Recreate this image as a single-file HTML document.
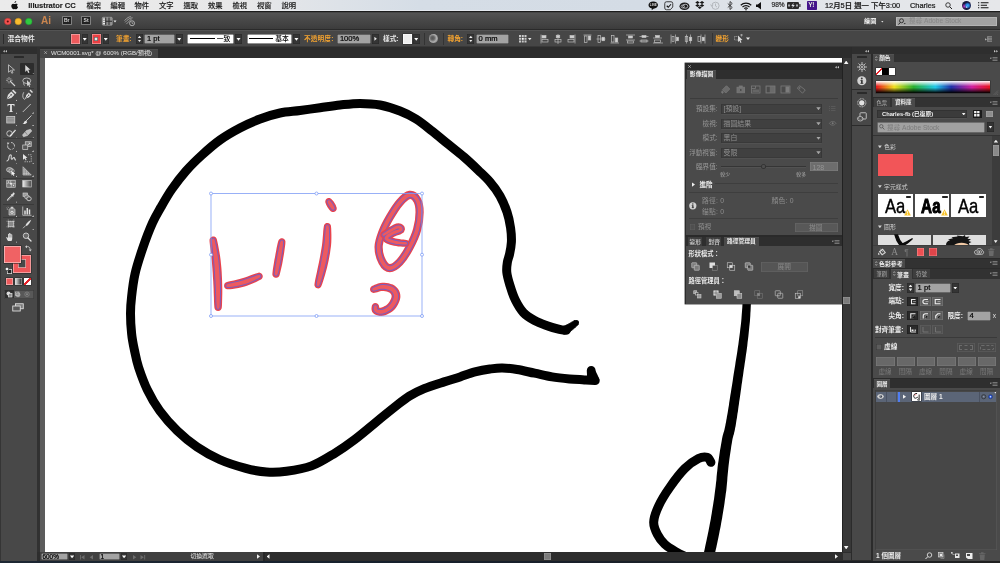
<!DOCTYPE html>
<html lang="zh-Hant">
<head>
<meta charset="utf-8">
<title>Illustrator CC</title>
<style>
*{box-sizing:border-box;margin:0;padding:0}
html,body{width:1000px;height:563px;overflow:hidden;background:#3a3a3a}
body{position:relative;will-change:transform;font-family:"Liberation Sans","Noto Sans CJK TC",sans-serif;font-size:6.5px;color:#e6e6e6;line-height:1}
.a{position:absolute}
.t{position:absolute;white-space:nowrap;line-height:1}
.b{font-weight:bold}
.or{color:#f5a430}
/* ---------- menu bar ---------- */
#menubar{left:0;top:0;width:1000px;height:11px;background:linear-gradient(90deg,#ebebeb 0,#e8e8e9 24%,#dde2e8 34%,#d5dde6 42%,#d4dce5 64%,#dde2e8 72%,#e3e6ea 85%,#e6e7ea 100%);color:#1b1b1b;font-size:7.3px;box-shadow:inset 0 -.5px 0 #f4f6f8}
#menubar .t{top:2px;font-weight:500;-webkit-text-stroke:.12px #1b1b1b}
#menubar .t.b{font-weight:bold}
/* ---------- app bar ---------- */
#appbar{left:0;top:11px;width:1000px;height:19px;background:linear-gradient(180deg,#1c1c1c 0,#1c1c1c 1.2px,#545454 1.6px,#4a4a4a 40%,#3d3d3d 92%,#2a2a2a 96%,#2a2a2a 100%)}
/* ---------- control bar ---------- */
#ctrl{left:0;top:30px;width:1000px;height:17.4px;background:#464646;box-shadow:inset 0 .7px 0 #585858,inset 0 -.6px 0 #2a2a2a}
/* ---------- tab bar ---------- */
#tabbar{left:37px;top:47.4px;width:815px;height:10.6px;background:#2c2c2c}
/* ---------- tools ---------- */
#tools{left:0;top:47px;width:37px;height:516px;background:#484848}
#toolgap{left:37px;top:47px;width:2.500px;height:516px;background:#313131}
#lb{left:39.500px;top:57.500px;width:6px;height:495px;background:#5c5c5c}
/* ---------- canvas ---------- */
#canvas{left:45.300px;top:57.800px;width:796.700px;height:494.200px;background:#fff}
#vscroll{left:842px;top:57.800px;width:10px;height:494.500px;background:#383838;border-left:.6px solid #222;border-right:1.500px solid #262626}
#status{left:37px;top:552px;width:815px;height:8.500px;background:#2d2d2d}
/* ---------- right dock ---------- */
#dock{left:852px;top:47px;width:148px;height:516px;background:#3a3a3a}
/* ---------- floating panel ---------- */
#fp{left:685px;top:63px;width:156px;height:241px;background:#4a4a4a}

/* widgets */
.dd{position:absolute;width:6.5px;height:9.5px;background:#353535;border-radius:.5px;box-shadow:inset 0 0 0 .5px #292929}
.dd:after{content:"";position:absolute;left:1.05px;top:3.6px;width:4.4px;height:2.9px;background:#fafafa;clip-path:polygon(0 0,100% 0,50% 100%)}
.fld{position:absolute;height:9.5px;background:#a3a3a3;color:#000;font-size:7.6px;line-height:9.7px;padding-left:2.6px;white-space:nowrap;-webkit-text-stroke:.2px #000;box-shadow:inset 0 0 0 .5px #2c2c2c,inset 0 .5px 0 #8a8a8a}
.stp{position:absolute;width:7px;height:9.5px;background:#353535;box-shadow:inset 0 0 0 .5px #292929}
.stp:before{content:"";position:absolute;left:1.6px;top:1.6px;width:3.8px;height:2.5px;background:#f0f0f0;clip-path:polygon(50% 0,100% 100%,0 100%)}
.stp:after{content:"";position:absolute;left:1.6px;bottom:1.6px;width:3.8px;height:2.5px;background:#f0f0f0;clip-path:polygon(0 0,100% 0,50% 100%)}
.wbox{position:absolute;height:9.5px;background:#fff;color:#000;font-size:6.5px;box-shadow:inset 0 0 0 .5px #222}
.sep{position:absolute;width:1px;background:#333;top:32.5px;height:12px}
.ic{position:absolute;overflow:visible}
.sdd:after{top:2.6px;left:.9px}
</style>
</head>
<body>
<div id="menubar" class="a">
<svg class="ic" style="left:11px;top:1px" width="7.5" height="9" viewBox="0 0 15 18"><path fill="#111" d="M10.4 0c.1 1-.3 2-.9 2.700-.6.700-1.600 1.300-2.500 1.200-.1-1 .4-2 .9-2.600C8.500.600 9.600.050 10.400 0zM13.600 6.300c-.9.600-1.500 1.500-1.500 2.700 0 1.400.8 2.500 2 3-.300.900-.8 1.800-1.300 2.500-.700 1-1.400 2-2.500 2s-1.400-.6-2.700-.6-1.700.6-2.700.6-1.800-1-2.600-2.100C.800 12.200 0 9.400 1.200 7.300 1.900 6.100 3.100 5.400 4.400 5.400c1 0 1.900.700 2.600.700.600 0 1.700-.800 2.900-.700 1.400.050 2.700.300 3.700.900z"/></svg>
<span class="t b" style="left:28.3px;font-size:7.6px;top:1.7px;letter-spacing:-.05px">Illustrator CC</span>
<span class="t" style="left:86.5px">檔案</span><span class="t" style="left:110.5px">編輯</span><span class="t" style="left:134.5px">物件</span><span class="t" style="left:159px">文字</span><span class="t" style="left:183.5px">選取</span><span class="t" style="left:208px">效果</span><span class="t" style="left:232.5px">檢視</span><span class="t" style="left:257px">視窗</span><span class="t" style="left:281.5px">說明</span>
<!-- status icons -->
<svg class="ic" style="left:648px;top:1px" width="10.500" height="9.500" viewBox="0 0 21 19"><path fill="#111" d="M10.500 1C5 1 1 4.200 1 8.200c0 3.300 2.800 6.100 6.800 6.900l-.5 3.200 3.700-3c5.200-.1 9-3.200 9-7.100C20 4.200 16 1 10.500 1z"/><text x="10.500" y="10.500" font-size="6" font-weight="bold" fill="#ddd" text-anchor="middle" font-family="Liberation Sans,sans-serif">LINE</text></svg>
<svg class="ic" style="left:664px;top:1px" width="9.500" height="9.500" viewBox="0 0 19 19"><path fill="none" stroke="#222" stroke-width="1.700" d="M5 1.500h9a3.500 3.500 0 0 1 3.500 3.500v7l-5 5.500H5A3.500 3.500 0 0 1 1.500 14V5A3.500 3.500 0 0 1 5 1.500z"/><path fill="none" stroke="#111" stroke-width="2.200" d="M5.500 9.500l3 3 5.500-6"/></svg>
<svg class="ic" style="left:678.5px;top:1.5px" width="11" height="8.500" viewBox="0 0 22 17"><ellipse cx="11" cy="8.500" rx="10" ry="7.500" fill="#1c1c1c"/><ellipse cx="12.500" cy="8.500" rx="5.200" ry="4" fill="none" stroke="#d8dce2" stroke-width="1.500"/><ellipse cx="7.500" cy="9" rx="3.500" ry="3" fill="none" stroke="#d8dce2" stroke-width="1.300"/></svg>
<svg class="ic" style="left:695px;top:1px" width="9.500" height="9" viewBox="0 0 19 18"><path fill="#151515" d="M5 0l4.500 3L5 6 .5 3zM14 0l4.500 3L14 6 9.500 3zM5 6l4.500 3L5 12 .5 9zM14 6l4.500 3L14 12 9.500 9zM9.500 10.500l4 2.700-4 2.800-4-2.800z"/></svg>
<svg class="ic" style="left:710px;top:1px" width="10" height="9.500" viewBox="0 0 20 19"><circle cx="11" cy="9.500" r="7.200" fill="none" stroke="#a9adb3" stroke-width="1.600"/><path fill="none" stroke="#a9adb3" stroke-width="1.500" d="M11 5v5l3 2M1 7l2.500 3.500L6.500 8"/></svg>
<svg class="ic" style="left:727px;top:1.2px" width="6" height="9" viewBox="0 0 12 18"><path fill="none" stroke="#222" stroke-width="1.600" d="M1.500 5l9 8-4.500 4V1l4.500 4-9 8"/></svg>
<svg class="ic" style="left:739.5px;top:1.5px" width="12" height="8.500" viewBox="0 0 24 17"><path fill="none" stroke="#111" stroke-width="2.300" d="M1.500 6.500a15 15 0 0 1 21 0M5 10a10 10 0 0 1 14 0M8.500 13.300a5 5 0 0 1 7 0"/><circle cx="12" cy="15.500" r="1.500" fill="#111"/></svg>
<svg class="ic" style="left:756px;top:2px" width="5.500" height="7.500" viewBox="0 0 11 15"><path fill="#111" d="M0 5h3.500L10 0v15L3.500 10H0z"/></svg>
<span class="t" style="left:771.5px;font-size:6.6px;top:2.3px;color:#2a2a2a;-webkit-text-stroke:.2px #2a2a2a">98%</span>
<svg class="ic" style="left:787px;top:2.3px" width="13.500" height="7" viewBox="0 0 27 14"><rect x="0" y="0" width="24" height="14" rx="2.500" fill="#2a2a2a"/><rect x="24.500" y="4" width="2.500" height="6" rx="1" fill="#2a2a2a"/><path fill="#dfe3e8" d="M13.500 1.500l-5 6.500h3.200l-1.200 4.500 5-6.500h-3.200z"/><rect x="2" y="5" width="4" height="4" fill="#dfe3e8" opacity=".7"/><rect x="18" y="5" width="4" height="4" fill="#dfe3e8" opacity=".7"/></svg>
<div class="a" style="left:807px;top:1px;width:9.5px;height:9px;background:#45158c;border-radius:.8px"></div><span class="t b" style="left:808.3px;top:2px;font-size:6.5px;color:#fff;letter-spacing:-.3px">Y!</span>
<span class="t" style="left:825px;font-size:7.4px;top:1.8px;-webkit-text-stroke:.22px #1b1b1b">12月5日 週一 下午3:00</span>
<span class="t" style="left:910px;font-size:7.4px;top:1.8px;-webkit-text-stroke:.22px #1b1b1b">Charles</span>
<svg class="ic" style="left:945px;top:1.8px" width="7.500" height="7.500" viewBox="0 0 15 15"><circle cx="6" cy="6" r="4.500" fill="none" stroke="#222" stroke-width="1.700"/><path stroke="#222" stroke-width="2" d="M9.500 9.500l4.500 4.500"/></svg>
<div class="a" style="left:961.8px;top:1px;width:9.4px;height:9.4px;border-radius:50%;background:radial-gradient(circle at 52% 68%,#fff 0,rgba(255,255,255,0) 14%),radial-gradient(circle at 62% 50%,#35b8f2 0,#2a7fe0 22%,rgba(30,60,170,0) 46%),radial-gradient(circle at 28% 58%,#c238c8 0,rgba(150,40,170,0) 34%),#15163c;box-shadow:0 0 0 .5px #f2f4f8"></div>
<svg class="ic" style="left:978px;top:2.3px" width="10.500" height="6.500" viewBox="0 0 21 13"><path stroke="#151515" stroke-width="2.300" d="M0 1.500h2.500M0 6.500h2.500M0 11.500h2.500M5.500 1.500H21M5.500 6.500H18M5.500 11.500H21"/></svg>
</div>
<div id="appbar" class="a"></div>
<svg class="ic" style="left:3px;top:17px" width="31" height="9" viewBox="0 0 31 9"><circle cx="4.75" cy="4.5" r="3.25" fill="#f4514f" stroke="#bf3534" stroke-width=".5"/><circle cx="4.75" cy="4.5" r="1.05" fill="#5c0d0c"/><circle cx="15.25" cy="4.5" r="3.25" fill="#f7bb2e" stroke="#c38d1c" stroke-width=".5"/><circle cx="25.75" cy="4.5" r="3.25" fill="#30c941" stroke="#1f9c2d" stroke-width=".5"/></svg>
<span class="t b" style="left:41px;top:13.900px;font-size:11.700px;color:#c9854f;transform:scaleX(.86);transform-origin:0 0">Ai</span>
<div class="a" style="left:62px;top:16.400px;width:9.500px;height:8.400px;border-radius:1.200px;background:#222;box-shadow:inset 0 0 0 .8px #9a9a9a"></div><span class="t b" style="left:64px;top:18.300px;font-size:5px;color:#d8d8d8">Br</span>
<div class="a" style="left:81.300px;top:16.400px;width:9.500px;height:8.400px;border-radius:1.200px;background:#222;box-shadow:inset 0 0 0 .8px #9a9a9a"></div><span class="t b" style="left:83.600px;top:18.300px;font-size:5px;color:#d8d8d8">St</span>
<svg class="ic" style="left:101.500px;top:16.500px" width="15" height="8.500" viewBox="0 0 30 17"><rect x=".5" y=".5" width="20" height="16" rx="2" fill="#8c8c8c" stroke="#b5b5b5"/><path stroke="#2a2a2a" stroke-width="2" d="M7.500 1v15M8 8.500h12M14 1v15"/><rect x="2" y="3" width="4" height="2.500" fill="#e8e8e8"/><rect x="2" y="7.500" width="4" height="2.500" fill="#e8e8e8"/><rect x="2" y="12" width="4" height="2.500" fill="#e8e8e8"/><path fill="#e8e8e8" d="M23 7h6l-3 4z"/></svg>
<svg class="ic" style="left:124px;top:16px" width="11.500" height="10.500" viewBox="0 0 20 18"><path fill="none" stroke="#a8a8a8" stroke-width="1.500" d="M1 8c4-5 8-7 11-7M2 11c4-5 9-8 13-8M4 14l9-9"/><circle cx="14" cy="12.500" r="4.300" fill="#3f3f3f" stroke="#c0c0c0" stroke-width="1.500"/><path fill="none" stroke="#c0c0c0" stroke-width="1.200" d="M14 10V12.700h2.200"/></svg>
<span class="t b" style="left:864px;top:18.200px;font-size:6.200px;color:#f0f0f0">繪圖</span>
<div class="a" style="left:880.800px;top:20.500px;width:3px;height:2px;background:#e0e0e0;clip-path:polygon(0 0,100% 0,50% 100%)"></div>
<div class="a" style="left:896px;top:17px;width:100.500px;height:8.800px;background:#a2a2a2;border-radius:.8px;box-shadow:inset 0 0 0 .6px #c4c4c4"></div>
<svg class="ic" style="left:898px;top:18px" width="8" height="7" viewBox="0 0 16 14"><circle cx="7" cy="5.500" r="4" fill="none" stroke="#2a2a2a" stroke-width="1.800"/><path stroke="#2a2a2a" stroke-width="2" d="M4.500 9L1 13"/><path fill="#2a2a2a" d="M11.500 10h4l-2 2.500z"/></svg>
<span class="t" style="left:909px;top:18.200px;font-size:6.600px;color:#878787">搜尋 Adobe Stock</span>
<div id="ctrl" class="a"></div>
<div class="a" style="left:2.500px;top:33.500px;width:1px;height:10.500px;background:#2b2b2b"></div>
<span class="t b" style="left:7.500px;top:36px;font-size:6.800px;color:#e8e8e8">混合物件</span>
<div class="a" style="left:70.500px;top:34px;width:9.800px;height:9.600px;background:#ef5b5d;box-shadow:inset 0 0 0 .7px #f4a9a9,0 0 0 .5px #2a2a2a"></div>
<div class="dd" style="left:81.500px;top:34.200px"></div>
<div class="a" style="left:91.500px;top:34px;width:9.800px;height:9.600px;background:#ea3f43;box-shadow:inset 0 0 0 .7px #f39a9a,0 0 0 .5px #2a2a2a"></div><div class="a" style="left:94.300px;top:36.800px;width:4.200px;height:4.200px;background:#e9e9e9;box-shadow:inset 0 0 0 .8px #6a6a6a"></div>
<div class="dd" style="left:102.500px;top:34.200px"></div>
<span class="t b or" style="left:116px;top:36px;font-size:6.700px">筆畫:</span>
<div class="stp" style="left:136px;top:34.200px"></div>
<div class="fld" style="left:144.300px;top:34.200px;width:30.500px">1 pt</div>
<div class="dd" style="left:176px;top:34.200px"></div>
<div class="wbox" style="left:187px;top:34.200px;width:46.800px"></div><div class="a" style="left:190px;top:38.300px;width:24.500px;height:1.100px;background:#000"></div><span class="t" style="left:216.800px;top:35.800px;font-size:6.800px;color:#000;font-weight:500">一致</span>
<div class="dd" style="left:235.300px;top:34.200px"></div>
<div class="wbox" style="left:246.500px;top:34.200px;width:45.300px"></div><div class="a" style="left:249px;top:38.200px;width:23.500px;height:1.300px;background:#000"></div><span class="t" style="left:275.300px;top:35.800px;font-size:6.800px;color:#000;font-weight:500">基本</span>
<div class="dd" style="left:293.200px;top:34.200px"></div>
<span class="t b or" style="left:304px;top:36px;font-size:6.700px;letter-spacing:.1px">不透明度:</span>
<div class="fld" style="left:337.300px;top:34.200px;width:34px">100%</div>
<div class="dd" style="left:372px;top:34.200px"></div><div class="a" style="left:372.600px;top:34.800px;width:5.400px;height:8.400px;background:#353535"></div><div class="a" style="left:374.400px;top:36.800px;width:2.4px;height:4px;background:#e8e8e8;clip-path:polygon(0 0,100% 50%,0 100%)"></div>
<span class="t b" style="left:383px;top:36px;font-size:6.700px;color:#e8e8e8">樣式:</span>
<div class="a" style="left:402.500px;top:34px;width:9.300px;height:9.600px;background:#eee;box-shadow:inset 0 0 0 .6px #fff,0 0 0 .5px #2a2a2a"></div>
<div class="dd" style="left:413px;top:34.200px"></div>
<div class="sep" style="left:423.500px"></div>
<div class="a" style="left:429.300px;top:34.400px;width:8.600px;height:8.600px;border-radius:50%;background:radial-gradient(circle at 40% 45%,#555 0,#666 25%,#b0b0b0 55%,#8a8a8a 75%,#c8c8c8 100%)"></div>
<div class="sep" style="left:442.500px"></div>
<span class="t b or" style="left:447.500px;top:36px;font-size:6.700px">轉角:</span>
<div class="stp" style="left:467.300px;top:34.200px"></div>
<div class="fld" style="left:476px;top:34.200px;width:32.800px">0 mm</div>
<svg class="ic" style="left:519px;top:34.500px" width="13" height="8" viewBox="0 0 26 16"><g fill="#c9c9c9"><rect x="0" y="0" width="4" height="4"/><rect x="5.500" y="0" width="4" height="4"/><rect x="11" y="0" width="4" height="4"/><rect x="0" y="5.500" width="4" height="4"/><rect x="5.500" y="5.500" width="4" height="4" fill="#fff"/><rect x="11" y="5.500" width="4" height="4"/><rect x="0" y="11" width="4" height="4"/><rect x="5.500" y="11" width="4" height="4"/><rect x="11" y="11" width="4" height="4"/></g><path fill="#e8e8e8" d="M18 6h7l-3.500 4.500z"/></svg>
<svg class="ic" style="left:540px;top:33.800px" width="166" height="10" viewBox="0 0 332 20" fill="none" stroke="#c4c4c4" stroke-width="1.300">
<g><path d="M2 1v18"/><rect x="4" y="3" width="8" height="5" fill="#d0d0d0"/><rect x="4" y="11" width="12" height="5"/></g>
<g transform="translate(28 0)"><path d="M8 0v20"/><rect x="4.500" y="2.500" width="7" height="5" fill="#d0d0d0"/><rect x="2" y="11" width="12" height="5"/></g>
<g transform="translate(54 0)"><path d="M16 1v18"/><rect x="6" y="3" width="8" height="5" fill="#d0d0d0"/><rect x="2" y="11" width="12" height="5"/></g>
<g transform="translate(87 0)"><path d="M0 2h16"/><rect x="2" y="4" width="5" height="13"/><rect x="9.500" y="4" width="5" height="8" fill="#d0d0d0"/></g>
<g transform="translate(113 0)"><path d="M0 10h18"/><rect x="3" y="3" width="5" height="14"/><rect x="11" y="6.500" width="5" height="7" fill="#d0d0d0"/></g>
<g transform="translate(141 0)"><path d="M0 18h17"/><rect x="2" y="3" width="5" height="13"/><rect x="9.500" y="8" width="5" height="8" fill="#d0d0d0"/></g>
<g transform="translate(172 0)"><path d="M0 2h18M0 12h18"/><rect x="5" y="4" width="8" height="4" fill="#d0d0d0"/><rect x="3" y="14" width="12" height="4"/></g>
<g transform="translate(199 0)"><path d="M0 5h18M0 14h18"/><rect x="5" y="3" width="8" height="4" fill="#d0d0d0"/><rect x="3" y="12" width="12" height="4"/></g>
<g transform="translate(226 0)"><path d="M0 8h18M0 18h20"/><rect x="5" y="3" width="8" height="4" fill="#d0d0d0"/><rect x="3" y="12" width="12" height="5"/></g>
<g transform="translate(260 0)"><path d="M2 1v18M11 1v18"/><rect x="4" y="5" width="4" height="10"/><rect x="13" y="6.500" width="4" height="7" fill="#d0d0d0"/></g>
<g transform="translate(288 0)"><path d="M5 1v18M13 1v18"/><rect x="2.500" y="5" width="5" height="10"/><rect x="11" y="6.500" width="4.500" height="7" fill="#d0d0d0"/></g>
<g transform="translate(314 0)"><path d="M8 1v18M16 1v18"/><rect x="2" y="5" width="5" height="10"/><rect x="10.500" y="6.500" width="4" height="7" fill="#d0d0d0"/></g>
</svg>
<div class="sep" style="left:711.500px"></div>
<span class="t b or" style="left:715.500px;top:36px;font-size:6.700px">變形</span>
<svg class="ic" style="left:734px;top:34px" width="17" height="9.500" viewBox="0 0 34 19"><rect x="1" y="5" width="9" height="7" fill="none" stroke="#bdbdbd" stroke-width="1.400" stroke-dasharray="2 1.500"/><path fill="#d8d8d8" d="M8 3l9 9-4 .5 2 4.500-2 1-2-4.500-3 2.500z"/><path stroke="#bdbdbd" stroke-width="1.300" d="M12 2h6M15 0v5"/><path fill="#e8e8e8" d="M24 7h8l-4 5z"/></svg>
<svg class="ic" style="left:984.500px;top:36px" width="8" height="6" viewBox="0 0 20 16"><path fill="#d0d0d0" d="M0 6l4 3-4 3z"/><path stroke="#bdbdbd" stroke-width="1.600" d="M6 2h12M6 6h12M6 10h12M6 14h12"/><path stroke="#bdbdbd" stroke-width="1.500" d="M6.700 1v14"/></svg>
<div id="tabbar" class="a"></div>
<div class="a" style="left:39.500px;top:48.500px;width:118.500px;height:9.300px;background:#464646;box-shadow:inset 0 .5px 0 #555"></div>
<svg class="ic" style="left:43.800px;top:51.300px" width="3.200" height="3.200" viewBox="0 0 6 6"><path stroke="#c8c8c8" stroke-width="1.100" d="M.5.500l5 5M5.500.500l-5 5"/></svg>
<span class="t" style="left:51px;top:50.400px;font-size:6.150px;color:#e2e2e2">WCM0001.svg* @ 600% (RGB/預視)</span>
<!--TOOLS-->
<div id="tools" class="a"></div>
<div class="a" style="left:0;top:47px;width:37.500px;height:6.500px;background:#2e2e2e"></div>
<div class="a" style="left:0;top:53.500px;width:1px;height:507px;background:#353535"></div>
<svg class="ic" style="left:3px;top:49.700px" width="4" height="2.600" viewBox="0 0 8 5"><path fill="#c8c8c8" d="M3.500 0v5L0 2.500zM8 0v5L4.500 2.500z"/></svg>
<div class="a" style="left:13.500px;top:56px;width:10px;height:1.600px;background:#2a2a2a;border-radius:.5px"></div>
<div class="a" style="left:19.500px;top:62.800px;width:14.500px;height:11.800px;background:#2d2d2d;border-radius:.8px"></div>
<div class="a" style="left:3px;top:87.6px;width:31px;height:.7px;background:#3a3a3a"></div>
<div class="a" style="left:3px;top:138.3px;width:31px;height:.7px;background:#3a3a3a"></div>
<div class="a" style="left:3px;top:177.7px;width:31px;height:.7px;background:#3a3a3a"></div>
<div class="a" style="left:3px;top:203.8px;width:31px;height:.7px;background:#3a3a3a"></div>
<div class="a" style="left:3px;top:216.6px;width:31px;height:.7px;background:#3a3a3a"></div>
<svg class="ic" style="left:6.2px;top:63.6px" width="10" height="10" viewBox="0 0 20 20"><path fill="none" stroke="#d2d2d2" stroke-width="1.500" stroke-linejoin="round" d="M5 1.500v15l4-3.500 2.500 5.500 2.500-1-2.500-5.500H17z"/></svg>
<svg class="ic" style="left:22.2px;top:63.6px" width="10" height="10" viewBox="0 0 20 20"><path fill="#d8d8d8" d="M6.500 2v14l3.500-3.500 2.300 5.500 2.600-1.100-2.300-5.400H17z"/></svg>
<svg class="ic" style="left:6.2px;top:76.8px" width="10" height="10" viewBox="0 0 20 20"><path stroke="#d2d2d2" stroke-width="2.200" d="M8 8l10 10"/><path stroke="#d2d2d2" stroke-width="1.300" d="M6 0v5M6 9v4M0 6.500h4M8 6.500h5M2 2.500l2.500 2.500M10 2.500L8 5M2.500 10.500L4.500 8.500"/></svg>
<svg class="ic" style="left:22.2px;top:76.8px" width="10" height="10" viewBox="0 0 20 20"><ellipse cx="9.500" cy="7.500" rx="8" ry="5.500" fill="none" stroke="#d2d2d2" stroke-width="1.600"/><path fill="#d2d2d2" d="M10 6l8 9-3.500.3 1.800 3.700-1.800.8-1.800-3.700-2.700 2z"/><path fill="none" stroke="#d2d2d2" stroke-width="1.300" d="M4 11c-2 2-1 5 2 6"/></svg>
<svg class="ic" style="left:6.2px;top:90.0px" width="10" height="10" viewBox="0 0 20 20"><path fill="#dcdcdc" d="M1.500 18.500L4 9.500 10.500 3l6.500 6.500L10.500 16zM12 1.500L14.500-1 21 5.500 18.500 8z"/><path stroke="#4a4a4a" stroke-width="1.200" d="M2.500 17.500l7-7"/><circle cx="10.300" cy="9.700" r="1.600" fill="#4a4a4a"/></svg>
<svg class="ic" style="left:22.2px;top:90.0px" width="10" height="10" viewBox="0 0 20 20"><path fill="#dcdcdc" d="M7 15.500l1.500-7L13.500 3.500l5 5-5 5zM15-.5l2-2 5 5-2 2z" transform="translate(0 1.500)"/><path stroke="#4a4a4a" stroke-width="1.100" d="M8 16l5-5"/><circle cx="13.300" cy="10.500" r="1.300" fill="#4a4a4a"/><path fill="none" stroke="#dcdcdc" stroke-width="1.500" d="M3.500 4.500C1 9 1 14 3 17s4.500 1 4-2"/></svg>
<svg class="ic" style="left:6.2px;top:102.8px" width="10" height="10" viewBox="0 0 20 20"><path fill="#e0e0e0" d="M3 2h14v4.500h-1.200c-.3-2-1-2.700-2.800-2.700h-1.200v11.500c0 1.200.5 1.500 2.200 1.600V18H6v-1.100c1.700-.1 2.200-.4 2.200-1.600V3.800H7C5.200 3.800 4.500 4.500 4.200 6.500H3z"/></svg>
<svg class="ic" style="left:22.2px;top:102.8px" width="10" height="10" viewBox="0 0 20 20"><path stroke="#d2d2d2" stroke-width="1.700" d="M1.500 18L17.500 2"/></svg>
<svg class="ic" style="left:6.2px;top:115.2px" width="10" height="10" viewBox="0 0 20 20"><rect x="1.500" y="3" width="16" height="13" fill="#8a8a8a" stroke="#d2d2d2" stroke-width="1.500"/><path stroke="#b5b5b5" stroke-width=".8" d="M2 7h15M2 10h15M2 13h15"/></svg>
<svg class="ic" style="left:22.2px;top:115.2px" width="10" height="10" viewBox="0 0 20 20"><path stroke="#d2d2d2" stroke-width="1.800" d="M19 1L7 13"/><path fill="#e6e6e6" d="M8 11.500l2.500 2.500c-1 3-4 4.500-9.500 4 2.500-1 2.500-2 3-3.500.5-1.500 2-3 4-3z"/></svg>
<svg class="ic" style="left:6.2px;top:127.6px" width="10" height="10" viewBox="0 0 20 20"><circle cx="7" cy="11" r="5.500" fill="none" stroke="#d2d2d2" stroke-width="1.700"/><path stroke="#e6e6e6" stroke-width="2.600" d="M7.500 16.500L19 4"/><path stroke="#4a4a4a" stroke-width=".8" d="M6 16l12-13"/></svg>
<svg class="ic" style="left:22.2px;top:127.6px" width="10" height="10" viewBox="0 0 20 20"><path fill="#bdbdbd" stroke="#e0e0e0" stroke-width="1" d="M9 5l8-2.500 2.500 3.500-8.500 9-8 2.500L1 14z"/><path stroke="#555" stroke-width="1" d="M6.500 8l4 5.500"/></svg>
<svg class="ic" style="left:6.2px;top:141.0px" width="10" height="10" viewBox="0 0 20 20"><path fill="none" stroke="#d2d2d2" stroke-width="1.700" stroke-dasharray="12 2.500 4 2.500" d="M10 3a7 7 0 1 1-6.500 4.500"/><path fill="#d2d2d2" d="M2 3l5 .5-3.500 4.500z"/></svg>
<svg class="ic" style="left:22.2px;top:141.0px" width="10" height="10" viewBox="0 0 20 20"><rect x="6.500" y="1.500" width="12" height="9.500" fill="#777" stroke="#d2d2d2" stroke-width="1.400"/><rect x="1.500" y="8" width="10" height="9" fill="#5a5a5a" stroke="#d2d2d2" stroke-width="1.400"/><path stroke="#efefef" stroke-width="1.200" d="M12 8l4-4M16 4v3M16 4h-3"/></svg>
<svg class="ic" style="left:6.2px;top:153.4px" width="10" height="10" viewBox="0 0 20 20"><path fill="none" stroke="#d2d2d2" stroke-width="2.300" stroke-linecap="round" d="M2 16c3-1 4-4 4-7s2-6 4-5-1 6 1 8 3-4 5-3 1 4 3 5"/></svg>
<svg class="ic" style="left:22.2px;top:153.4px" width="10" height="10" viewBox="0 0 20 20"><path fill="#e6e6e6" d="M2 2l9 7.500-3.800.6 2 4-1.800.9-2-4L2 13.500z"/><path fill="none" stroke="#d2d2d2" stroke-width="1.500" stroke-dasharray="2.500 2" d="M12 3.500h6.500v14H5"/></svg>
<svg class="ic" style="left:6.2px;top:166.0px" width="10" height="10" viewBox="0 0 20 20"><ellipse cx="7" cy="7.500" rx="6" ry="4.500" fill="#777" stroke="#d2d2d2" stroke-width="1.400"/><ellipse cx="11" cy="10" rx="5.500" ry="4.500" fill="none" stroke="#d2d2d2" stroke-width="1.300"/><path fill="#f0f0f0" d="M10.500 9l8 7-3.300.4 1.500 3-1.600.8-1.500-3-2.400 2z"/></svg>
<svg class="ic" style="left:22.2px;top:166.0px" width="10" height="10" viewBox="0 0 20 20"><path fill="#7d7d7d" stroke="#d2d2d2" stroke-width="1.300" d="M2 1.500v16.500h16.500z"/><path stroke="#d8d8d8" stroke-width=".9" d="M5.500 5v13M9 8.500v9.500M12.500 12v6M2 8h6M2 12h10M2 15h13"/></svg>
<svg class="ic" style="left:6.2px;top:179.3px" width="10" height="10" viewBox="0 0 20 20"><rect x="1.500" y="2.500" width="17" height="14" fill="#777" stroke="#d2d2d2" stroke-width="1.300"/><path fill="none" stroke="#e0e0e0" stroke-width="1.200" d="M1.500 9c5-3 11 3 17 0M10 2.500c-3 4 3 9 0 14"/><circle cx="10" cy="9.500" r="1.800" fill="#f0f0f0"/><circle cx="5" cy="6" r="1.300" fill="#e0e0e0"/><circle cx="15" cy="13" r="1.300" fill="#e0e0e0"/></svg>
<svg class="ic" style="left:22.2px;top:179.3px" width="10" height="10" viewBox="0 0 20 20"><defs><linearGradient id="gg"><stop offset="0" stop-color="#eee"/><stop offset="1" stop-color="#444"/></linearGradient></defs><rect x="1.500" y="3" width="17" height="13" fill="url(#gg)" stroke="#d2d2d2" stroke-width="1.300"/></svg>
<svg class="ic" style="left:6.2px;top:191.7px" width="10" height="10" viewBox="0 0 20 20"><path fill="#e0e0e0" d="M14 1.500c1.500-1.500 4.500 1 3 3l-2.500 2.500 1 1-1.500 1.500-1-1-7.500 7.500c-1 1-2 .5-3 1.500L1.500 17c1-1 .5-2 1.500-3L10.500 6.500l-1-1L11 4l1 1z"/><path stroke="#4a4a4a" stroke-width="1.200" d="M4.500 15.500l6.500-6.500"/></svg>
<svg class="ic" style="left:22.2px;top:191.7px" width="10" height="10" viewBox="0 0 20 20"><rect x="2" y="2" width="9" height="7" fill="#9a9a9a" stroke="#d2d2d2" stroke-width="1.300"/><ellipse cx="10" cy="10" rx="5" ry="4" fill="#777" stroke="#d2d2d2" stroke-width="1.200"/><ellipse cx="14" cy="13.500" rx="4.500" ry="4" fill="#4a4a4a" stroke="#e8e8e8" stroke-width="1.500"/></svg>
<svg class="ic" style="left:6.2px;top:206.0px" width="10" height="10" viewBox="0 0 20 20"><path fill="#8a8a8a" stroke="#d2d2d2" stroke-width="1.300" d="M6 8c0-2 2-3.500 4-3.500h4c2 0 4 1.500 4 3.500v10H6z"/><rect x="9.500" y="1.500" width="5" height="3.500" fill="#d2d2d2"/><circle cx="12" cy="12.500" r="3" fill="#e6e6e6"/><circle cx="12" cy="12.500" r="1.200" fill="#555"/><path stroke="#d2d2d2" stroke-width="1.100" d="M1 3.500l2 1M1.500 6.500h2.500M4 1.500l1.500 2"/></svg>
<svg class="ic" style="left:22.2px;top:206.0px" width="10" height="10" viewBox="0 0 20 20"><path fill="none" stroke="#d2d2d2" stroke-width="1.500" d="M1.500 1v17.500H19"/><rect x="4.500" y="9" width="3" height="8" fill="#e0e0e0"/><rect x="9" y="4" width="3" height="13" fill="#e0e0e0"/><rect x="13.500" y="7" width="3" height="10" fill="#e0e0e0"/></svg>
<svg class="ic" style="left:6.2px;top:219.4px" width="10" height="10" viewBox="0 0 20 20"><rect x="4.500" y="4.500" width="11" height="11" fill="#8a8a8a" stroke="#d2d2d2" stroke-width="1.300"/><path stroke="#d2d2d2" stroke-width="1.200" stroke-dasharray="2 1.600" d="M1 4.500h18M1 15.500h18M4.500 1v18M15.500 1v18"/></svg>
<svg class="ic" style="left:22.2px;top:219.4px" width="10" height="10" viewBox="0 0 20 20"><path fill="#e0e0e0" d="M18.500 1.500c-5 2-9 6-11.500 11l2.500 1.500c4-3.500 7-7.500 9-12.500z"/><path stroke="#d2d2d2" stroke-width="1.600" d="M7.500 13L2 18.500"/></svg>
<svg class="ic" style="left:6.2px;top:231.7px" width="10" height="10" viewBox="0 0 20 20"><path fill="#e0e0e0" d="M4 18c-1.500-2.500-3-5-3.500-7-.3-1.200 1.200-1.800 2-.5L4 12.500V4.500c0-1.500 2-1.500 2 0V3c0-1.500 2.200-1.500 2.200 0v1c0-1.600 2.200-1.500 2.200 0v1.500c0-1.500 2.100-1.500 2.100 0V13c0 2-.5 3.500-1.500 5z"/><path stroke="#4a4a4a" stroke-width=".7" d="M6.100 5v6M8.300 4.500v6.500M10.500 5.500v5.500"/></svg>
<svg class="ic" style="left:22.2px;top:231.7px" width="10" height="10" viewBox="0 0 20 20"><circle cx="8" cy="7.500" r="5.500" fill="#6a6a6a" stroke="#d2d2d2" stroke-width="1.800"/><path stroke="#e0e0e0" stroke-width="2.600" stroke-linecap="round" d="M12 12l6 6"/></svg>
<div class="a" style="left:15.800px;top:99.3px;width:1.6px;height:1.6px;background:#e0e0e0;clip-path:polygon(100% 0,100% 100%,0 100%)"></div>
<div class="a" style="left:15.800px;top:112.1px;width:1.6px;height:1.6px;background:#e0e0e0;clip-path:polygon(100% 0,100% 100%,0 100%)"></div>
<div class="a" style="left:15.800px;top:124.5px;width:1.6px;height:1.6px;background:#e0e0e0;clip-path:polygon(100% 0,100% 100%,0 100%)"></div>
<div class="a" style="left:15.800px;top:136.9px;width:1.6px;height:1.6px;background:#e0e0e0;clip-path:polygon(100% 0,100% 100%,0 100%)"></div>
<div class="a" style="left:15.800px;top:150.3px;width:1.6px;height:1.6px;background:#e0e0e0;clip-path:polygon(100% 0,100% 100%,0 100%)"></div>
<div class="a" style="left:15.800px;top:162.7px;width:1.6px;height:1.6px;background:#e0e0e0;clip-path:polygon(100% 0,100% 100%,0 100%)"></div>
<div class="a" style="left:15.800px;top:175.3px;width:1.6px;height:1.6px;background:#e0e0e0;clip-path:polygon(100% 0,100% 100%,0 100%)"></div>
<div class="a" style="left:15.800px;top:201.0px;width:1.6px;height:1.6px;background:#e0e0e0;clip-path:polygon(100% 0,100% 100%,0 100%)"></div>
<div class="a" style="left:15.800px;top:215.3px;width:1.6px;height:1.6px;background:#e0e0e0;clip-path:polygon(100% 0,100% 100%,0 100%)"></div>
<div class="a" style="left:15.800px;top:241.0px;width:1.6px;height:1.6px;background:#e0e0e0;clip-path:polygon(100% 0,100% 100%,0 100%)"></div>
<div class="a" style="left:32px;top:72.9px;width:1.6px;height:1.6px;background:#e0e0e0;clip-path:polygon(100% 0,100% 100%,0 100%)"></div>
<div class="a" style="left:32px;top:112.1px;width:1.6px;height:1.6px;background:#e0e0e0;clip-path:polygon(100% 0,100% 100%,0 100%)"></div>
<div class="a" style="left:32px;top:124.5px;width:1.6px;height:1.6px;background:#e0e0e0;clip-path:polygon(100% 0,100% 100%,0 100%)"></div>
<div class="a" style="left:32px;top:136.9px;width:1.6px;height:1.6px;background:#e0e0e0;clip-path:polygon(100% 0,100% 100%,0 100%)"></div>
<div class="a" style="left:32px;top:150.3px;width:1.6px;height:1.6px;background:#e0e0e0;clip-path:polygon(100% 0,100% 100%,0 100%)"></div>
<div class="a" style="left:32px;top:162.7px;width:1.6px;height:1.6px;background:#e0e0e0;clip-path:polygon(100% 0,100% 100%,0 100%)"></div>
<div class="a" style="left:32px;top:175.3px;width:1.6px;height:1.6px;background:#e0e0e0;clip-path:polygon(100% 0,100% 100%,0 100%)"></div>
<div class="a" style="left:32px;top:215.3px;width:1.6px;height:1.6px;background:#e0e0e0;clip-path:polygon(100% 0,100% 100%,0 100%)"></div>
<div class="a" style="left:32px;top:228.7px;width:1.6px;height:1.6px;background:#e0e0e0;clip-path:polygon(100% 0,100% 100%,0 100%)"></div>
<div class="a" style="left:13px;top:254.600px;width:17.500px;height:18px;background:#ee5659;box-shadow:inset 0 0 0 .7px #f6b4b4,0 0 0 .6px #2a2a2a"></div>
<div class="a" style="left:17.500px;top:259.300px;width:8.500px;height:8.600px;background:#484848;box-shadow:inset 0 0 0 .7px #f6b4b4,inset 0 0 0 .5px #2a2a2a"></div>
<div class="a" style="left:4px;top:245.500px;width:17.300px;height:17.600px;background:#f06264;box-shadow:inset 0 0 0 .8px #f8c0c0,0 0 0 .6px #2a2a2a"></div>
<svg class="ic" style="left:25px;top:245px" width="7" height="7" viewBox="0 0 14 14"><path fill="none" stroke="#d0d0d0" stroke-width="1.500" d="M3 3.500c4-1.500 7 1 7.500 5.500"/><path fill="#d0d0d0" d="M0 3.500l4-3v6zM10.500 13l-3-4h6z"/></svg>
<div class="a" style="left:7px;top:269px;width:4.800px;height:4.800px;background:#222;box-shadow:inset 0 0 0 .7px #ddd"></div><div class="a" style="left:4.500px;top:266.500px;width:4.800px;height:4.800px;background:#f4f4f4;box-shadow:inset 0 0 0 .7px #333"></div>
<div class="a" style="left:6px;top:277.700px;width:6.800px;height:7px;background:#ef5b5d;box-shadow:inset 0 0 0 .7px #f6b4b4,0 0 0 .5px #262626"></div>
<div class="a" style="left:15px;top:277.700px;width:6.800px;height:7px;background:linear-gradient(90deg,#f4f4f4,#1a1a1a);box-shadow:inset 0 0 0 .5px #ccc,0 0 0 .5px #262626"></div>
<div class="a" style="left:24.300px;top:277.700px;width:6.800px;height:7px;background:linear-gradient(135deg,#fff 0,#fff 40%,#e8232a 41%,#e8232a 59%,#fff 60%,#fff 100%);box-shadow:0 0 0 .5px #262626"></div>
<div class="a" style="left:4px;top:289.800px;width:29.500px;height:8.800px;background:#585858;border-radius:1px;box-shadow:inset 0 0 0 .5px #333"></div><div class="a" style="left:4.500px;top:290.300px;width:9px;height:7.800px;background:#2e2e2e"></div>
<svg class="ic" style="left:6px;top:291px" width="26" height="6.500" viewBox="0 0 52 13"><circle cx="5" cy="5" r="4" fill="#d8d8d8"/><rect x="5" y="5" width="7" height="7" fill="#8a8a8a" stroke="#e8e8e8" stroke-width="1.300"/><circle cx="24" cy="7.500" r="4" fill="#8a8a8a" stroke="#d0d0d0" stroke-width="1.200"/><rect x="19" y="2" width="7" height="6.500" fill="none" stroke="#d0d0d0" stroke-width="1.200"/><circle cx="42" cy="6.500" r="4.500" fill="none" stroke="#8e8e8e" stroke-width="1.200"/><circle cx="42" cy="6.500" r="1.800" fill="#8e8e8e"/></svg>
<svg class="ic" style="left:12.300px;top:303px" width="12" height="9" viewBox="0 0 24 18"><rect x="7" y="1.500" width="15.500" height="10" fill="#7a7a7a" stroke="#e4e4e4" stroke-width="1.700"/><rect x="1.500" y="6" width="15" height="10" fill="#5a5a5a" stroke="#e4e4e4" stroke-width="1.700"/></svg>
<!--/TOOLS-->
<div id="toolgap" class="a"></div><div id="lb" class="a"></div>
<div id="canvas" class="a"></div>
<svg id="art" class="a" style="left:45px;top:58px" width="797" height="494" viewBox="45 58 797 494">
<g fill="none" stroke="#000" stroke-width="9" stroke-linecap="round" stroke-linejoin="round">
<path d="M566.3 330.3 C565.2 330.1 562.7 330.2 559.5 329.4 C556.3 328.6 551.2 327.2 547.1 325.7 C543.0 324.2 538.6 322.7 534.6 320.5 C530.6 318.3 526.6 316.1 523.4 312.6 C520.2 309.2 517.5 304.4 515.2 299.8 C512.9 295.2 511.2 289.5 509.8 284.9 C508.4 280.3 507.2 276.2 506.8 272.4 C506.4 268.6 506.9 265.1 507.4 262.0 C507.9 258.9 508.9 257.3 509.6 254.0 C510.3 250.7 511.2 246.3 511.4 242.0 C511.6 237.7 511.3 233.0 510.6 228.0 C509.9 223.0 508.8 217.3 507.0 212.0 C505.2 206.7 502.8 201.0 500.0 196.0 C497.2 191.0 493.7 186.3 490.0 182.0 C486.3 177.7 482.3 174.2 478.0 170.0 C473.7 165.8 469.0 161.3 464.0 157.0 C459.0 152.7 453.3 148.3 448.0 144.0 C442.7 139.7 437.3 135.2 432.0 131.0 C426.7 126.8 421.3 122.3 416.0 119.0 C410.7 115.7 406.0 113.3 400.0 111.0 C394.0 108.7 386.7 106.3 380.0 105.0 C373.3 103.7 366.7 103.4 360.0 103.4 C353.3 103.4 346.7 104.3 340.0 105.0 C333.3 105.7 326.7 106.8 320.0 107.7 C313.3 108.6 306.7 109.6 300.0 110.5 C293.3 111.4 286.7 111.6 280.0 113.0 C273.3 114.4 266.7 116.5 260.0 119.0 C253.3 121.5 246.7 124.5 240.0 128.0 C233.3 131.5 226.3 135.5 220.0 140.0 C213.7 144.5 207.7 149.8 202.0 155.0 C196.3 160.2 191.0 165.3 186.0 171.0 C181.0 176.7 176.2 183.0 172.0 189.0 C167.8 195.0 164.2 201.4 161.0 207.0 C157.8 212.6 155.7 215.8 152.6 222.7 C149.5 229.6 145.6 239.8 142.7 248.3 C139.8 256.8 136.8 265.8 135.0 273.9 C133.2 281.9 132.3 290.0 131.6 296.6 C130.8 303.2 130.5 307.5 130.5 313.6 C130.5 319.8 130.9 327.4 131.6 333.5 C132.2 339.6 133.2 344.4 134.4 350.0 C135.6 355.6 136.4 360.8 138.6 367.4 C140.8 374.0 143.8 382.6 147.3 389.8 C150.8 397.1 154.8 404.1 159.8 410.9 C164.8 417.7 171.0 424.8 177.2 430.8 C183.4 436.8 190.0 442.2 197.1 447.0 C204.2 451.8 211.4 455.9 219.5 459.5 C227.6 463.1 238.0 466.3 245.8 468.4 C253.6 470.5 259.7 471.5 266.5 472.0 C273.3 472.5 279.0 472.3 286.5 471.3 C294.0 470.3 303.5 468.9 311.5 465.9 C319.5 462.9 327.5 457.7 334.7 453.3 C341.9 448.9 348.0 444.6 354.6 439.6 C361.2 434.6 367.9 428.8 374.5 423.4 C381.1 418.0 388.6 411.9 394.4 407.3 C400.2 402.8 404.3 399.2 409.3 396.1 C414.3 393.0 418.4 391.0 424.2 388.6 C430.0 386.2 438.1 383.8 444.1 381.9 C450.1 379.9 454.9 378.6 460.0 376.9 C465.1 375.2 469.9 373.2 474.9 371.9 C479.9 370.6 485.3 369.6 489.9 369.0 C494.5 368.4 497.8 367.9 502.3 368.0 C506.9 368.1 511.8 368.6 517.2 369.5 C522.6 370.4 528.8 372.0 534.6 373.2 C540.4 374.4 546.2 375.9 552.0 376.9 C557.8 377.8 564.1 378.4 569.5 378.9 C574.9 379.4 580.1 379.6 584.4 379.9 C588.7 380.2 593.4 380.5 595.2 380.6"/>
<path stroke-width="8.8" d="M591.5 377.5 C591.5 376.3 591.2 371.6 591.2 370.4"/>
<path fill="#000" stroke-width="1" d="M564.1 334.1 L564.3 334.0 L564.6 334.0 L565.0 333.9 L565.5 333.7 L566.1 333.6 L566.8 333.4 L567.5 333.1 L568.2 332.8 L568.9 332.4 L569.5 332.0 L570.1 331.5 L570.8 331.1 L571.4 330.6 L572.0 330.1 L572.6 329.6 L573.2 329.1 L573.9 328.5 L574.6 327.9 L575.3 327.2 L576.0 326.6 L576.7 325.9 L577.3 325.4 L577.8 324.9 L578.2 324.6 L575.0 320.2 L574.5 320.5 L573.9 320.9 L573.2 321.3 L572.5 321.8 L571.6 322.2 L570.8 322.7 L570.1 323.2 L569.4 323.5 L568.7 323.9 L568.1 324.2 L567.4 324.6 L566.8 324.9 L566.2 325.1 L565.7 325.4 L565.2 325.6 L564.8 325.8 L564.4 326.0 L564.1 326.2 L563.7 326.3 L563.4 326.4 L563.0 326.6 L562.6 326.7 L562.2 326.8 L561.9 326.9Z"/>
<circle cx="576.5" cy="322.5" r="2.5" fill="#000" stroke="none"/>
<path stroke-width="6" d="M593.0 372.5 C593.5 373.6 595.7 378.2 596.2 379.3"/>
<path fill="#000" stroke="none" d="M742.7 297.9 L742.7 298.3 L742.7 298.7 L742.7 299.1 L742.7 299.6 L742.7 300.3 L742.6 301.1 L742.6 302.2 L742.5 303.7 L742.4 305.4 L742.3 307.5 L742.1 309.9 L741.9 312.4 L741.7 315.1 L741.5 317.9 L741.3 320.6 L741.0 323.4 L740.7 326.1 L740.3 329.0 L740.0 332.0 L739.6 335.0 L739.2 338.1 L738.8 341.1 L738.4 344.2 L737.9 347.2 L737.5 350.2 L737.1 353.1 L736.6 356.1 L736.1 359.1 L735.6 362.1 L735.2 365.1 L734.7 368.1 L734.2 371.1 L733.7 374.1 L733.2 377.2 L732.8 380.3 L732.3 383.4 L731.8 386.4 L731.3 389.4 L730.9 392.3 L730.4 395.1 L730.0 397.7 L729.6 400.3 L729.2 402.8 L728.9 405.2 L728.5 407.6 L728.1 409.9 L727.8 412.1 L727.4 414.2 L727.0 416.3 L726.7 418.3 L726.3 420.3 L726.0 422.2 L725.6 424.0 L725.3 425.8 L724.9 427.4 L724.6 428.9 L724.3 430.2 L724.1 431.1 L723.8 431.9 L723.5 432.8 L723.2 433.9 L722.8 435.3 L722.4 436.9 L722.0 439.0 L721.6 441.4 L721.1 444.2 L720.6 447.3 L720.0 450.6 L719.5 454.0 L719.0 457.5 L718.5 460.9 L718.0 464.1 L717.6 467.3 L717.3 470.5 L716.9 473.7 L716.6 476.8 L716.4 479.9 L716.0 483.0 L715.7 486.0 L715.3 489.0 L714.9 492.1 L714.5 495.3 L714.1 498.4 L713.6 501.6 L713.1 504.7 L712.6 507.8 L712.1 510.8 L711.7 513.6 L711.2 516.3 L710.8 518.9 L710.3 521.4 L709.8 523.9 L709.4 526.3 L708.9 528.7 L708.5 531.0 L708.0 533.3 L707.5 535.7 L707.0 538.1 L706.5 540.4 L706.0 542.8 L705.5 545.0 L705.1 547.1 L704.7 549.0 L704.3 550.7 L704.0 552.1 L703.8 553.2 L703.6 554.2 L703.5 555.0 L703.3 555.6 L703.2 556.2 L703.2 556.6 L703.1 557.0 L713.9 559.0 L714.0 558.6 L714.1 558.1 L714.2 557.6 L714.3 557.0 L714.4 556.3 L714.6 555.3 L714.8 554.2 L715.1 552.9 L715.4 551.3 L715.8 549.5 L716.3 547.4 L716.8 545.1 L717.3 542.8 L717.8 540.3 L718.3 537.9 L718.8 535.5 L719.3 533.1 L719.7 530.8 L720.2 528.4 L720.7 525.9 L721.1 523.4 L721.6 520.8 L722.1 518.2 L722.5 515.4 L723.0 512.5 L723.5 509.5 L724.0 506.4 L724.5 503.2 L724.9 500.0 L725.4 496.8 L725.8 493.6 L726.3 490.4 L726.6 487.2 L726.9 484.0 L727.2 480.9 L727.4 477.7 L727.7 474.6 L728.0 471.6 L728.3 468.5 L728.6 465.5 L729.0 462.3 L729.4 459.0 L729.9 455.6 L730.4 452.2 L730.9 449.0 L731.3 445.9 L731.8 443.2 L732.2 440.8 L732.5 439.0 L732.8 437.7 L733.1 436.7 L733.3 435.8 L733.6 434.9 L733.9 433.9 L734.2 432.6 L734.6 431.1 L734.9 429.4 L735.2 427.7 L735.6 425.9 L735.9 424.0 L736.2 422.0 L736.5 420.0 L736.9 417.9 L737.2 415.8 L737.5 413.6 L737.9 411.4 L738.2 409.1 L738.5 406.7 L738.9 404.2 L739.2 401.7 L739.6 399.2 L740.0 396.5 L740.4 393.7 L740.8 390.8 L741.2 387.9 L741.6 384.8 L742.1 381.7 L742.5 378.6 L743.0 375.5 L743.4 372.5 L743.8 369.5 L744.3 366.5 L744.7 363.5 L745.2 360.5 L745.6 357.5 L746.0 354.5 L746.5 351.4 L746.9 348.4 L747.3 345.4 L747.6 342.3 L748.0 339.2 L748.4 336.1 L748.7 333.0 L749.0 330.0 L749.3 327.1 L749.6 324.2 L749.9 321.4 L750.1 318.5 L750.3 315.7 L750.4 313.0 L750.6 310.4 L750.7 308.0 L750.8 305.9 L750.9 304.1 L751.0 302.7 L751.0 301.5 L751.1 300.5 L751.1 299.8 L751.1 299.2 L751.1 298.7 L751.1 298.4 L751.1 298.1Z"/>
<path d="M710.9 462.3 C710.3 461.5 709.3 457.9 707.2 457.3 C705.1 456.7 702.2 456.7 698.5 458.6 C694.8 460.5 689.6 463.7 684.8 468.5 C680.0 473.3 674.2 481.0 669.9 487.2 C665.5 493.4 661.4 500.0 658.7 505.8 C656.0 511.6 653.9 517.2 653.7 522.0 C653.5 526.8 655.5 530.7 657.4 534.4 C659.2 538.1 661.7 541.3 664.8 544.2 C667.9 547.1 672.5 549.7 676.0 551.8 C679.5 553.9 684.3 556.1 686.0 557.0"/>
</g>
<g fill="none" stroke-linecap="round" stroke-linejoin="round">
<defs><path id="rp" d="M409.7 194.9 C406.8 195.3 403.1 198.7 399.8 202.4 C396.5 206.1 392.7 212.3 389.8 217.3 C386.9 222.3 384.3 227.2 382.4 232.2 C380.5 237.2 378.6 242.1 378.6 247.1 C378.6 252.1 380.5 258.5 382.4 262.0 C384.3 265.5 386.9 268.2 389.8 268.2 C392.7 268.2 396.5 265.5 399.8 262.0 C403.1 258.5 406.8 252.5 409.7 247.1 C412.6 241.7 415.5 235.5 417.1 229.7 C418.8 223.9 419.6 217.3 419.6 212.3 C419.6 207.3 418.8 202.8 417.1 199.9 C415.5 197.0 412.6 194.5 409.7 194.9Z"/></defs>
<use href="#rp" stroke="#e8434d" stroke-width="8.2"/>
<use href="#rp" stroke="#7060cc" stroke-width="5.6" stroke-opacity=".9"/>
<use href="#rp" stroke="#ee5a5e" stroke-width="3.7"/>
<path fill="#e8434d" d="M209.5 240.7 L209.7 242.9 L210.0 245.9 L210.5 249.5 L211.0 253.3 L211.4 257.3 L211.8 261.1 L212.1 264.8 L212.4 268.8 L212.7 272.9 L212.9 277.0 L213.2 281.0 L213.4 285.0 L213.6 289.0 L213.7 293.3 L213.9 297.6 L214.0 301.6 L214.2 305.0 L214.4 307.4 L214.7 308.8 L215.5 310.0 L216.7 310.8 L218.1 311.1 L219.5 310.8 L220.7 310.0 L221.5 308.8 L221.8 307.4 L222.0 304.9 L222.1 301.6 L222.2 297.6 L222.3 293.2 L222.3 288.8 L222.2 284.6 L222.1 280.6 L221.9 276.5 L221.7 272.3 L221.4 268.1 L221.0 264.1 L220.6 260.1 L220.1 256.2 L219.4 252.1 L218.7 248.2 L218.0 244.6 L217.4 241.7 L216.9 239.5 L216.4 238.2 L215.4 237.1 L214.1 236.5 L212.6 236.4 L211.3 236.9 L210.2 237.9 L209.6 239.2Z M228.4 289.3 L230.1 289.2 L232.5 288.9 L235.4 288.5 L238.5 288.0 L241.6 287.3 L244.6 286.5 L247.6 285.5 L250.7 284.3 L253.8 283.0 L256.6 281.7 L258.9 280.6 L260.5 279.7 L261.7 278.9 L262.5 277.7 L262.8 276.3 L262.5 274.9 L261.7 273.7 L260.5 272.9 L259.1 272.6 L257.7 272.9 L255.9 273.4 L253.5 274.2 L250.7 275.3 L247.7 276.4 L244.8 277.4 L242.2 278.3 L239.6 279.0 L236.7 279.7 L233.8 280.4 L231.0 281.0 L228.7 281.5 L227.0 282.1 L225.7 282.6 L224.6 283.6 L224.1 285.0 L224.1 286.4 L224.6 287.7 L225.6 288.8 L227.0 289.3Z M278.2 241.3 L277.7 243.0 L277.2 245.3 L276.6 248.0 L276.1 251.0 L275.5 254.0 L275.0 256.9 L274.4 259.7 L273.9 262.9 L273.4 266.1 L272.9 269.1 L272.6 271.7 L272.4 273.5 L272.4 274.9 L273.0 276.3 L274.0 277.3 L275.3 277.8 L276.7 277.8 L278.1 277.2 L279.1 276.2 L279.6 274.9 L280.1 273.1 L280.7 270.6 L281.4 267.6 L282.1 264.4 L282.7 261.3 L283.2 258.3 L283.7 255.5 L284.2 252.4 L284.6 249.4 L285.0 246.6 L285.3 244.2 L285.4 242.5 L285.4 241.1 L284.8 239.8 L283.7 238.8 L282.4 238.3 L281.0 238.3 L279.7 238.9 L278.7 240.0Z M325.8 203.7 L326.1 204.6 L326.7 205.8 L327.5 207.2 L328.4 208.6 L329.3 209.7 L330.0 210.4 L331.0 211.4 L332.3 212.0 L333.7 212.0 L335.1 211.5 L336.1 210.5 L336.7 209.2 L336.7 207.8 L336.2 206.4 L335.9 205.5 L335.3 204.3 L334.5 202.9 L333.6 201.5 L332.7 200.4 L332.0 199.7 L331.0 198.7 L329.7 198.1 L328.3 198.1 L326.9 198.6 L325.9 199.6 L325.3 200.9 L325.3 202.3Z M323.8 226.4 L323.5 228.4 L323.2 231.3 L323.0 234.5 L322.7 238.1 L322.4 241.6 L322.0 245.0 L321.5 248.3 L320.9 251.7 L320.3 255.3 L319.6 258.9 L318.9 262.4 L318.2 265.7 L317.5 269.1 L316.8 272.6 L316.0 276.0 L315.3 279.2 L314.8 281.9 L314.5 283.9 L314.4 285.3 L314.9 286.6 L315.8 287.7 L317.1 288.3 L318.5 288.4 L319.8 287.9 L320.9 287.0 L321.5 285.7 L322.2 283.9 L323.1 281.3 L324.1 278.1 L325.1 274.7 L326.1 271.1 L327.0 267.7 L327.8 264.3 L328.6 260.7 L329.3 257.0 L330.0 253.3 L330.5 249.6 L331.0 246.0 L331.3 242.3 L331.4 238.5 L331.4 234.8 L331.3 231.4 L331.2 228.6 L331.0 226.6 L330.8 225.2 L330.0 224.0 L328.9 223.2 L327.5 222.9 L326.1 223.1 L324.9 223.9 L324.1 225.0Z M385.3 237.7 L387.0 236.8 L389.4 235.5 L392.1 234.0 L394.7 232.5 L397.0 231.4 L398.4 230.8 L398.6 230.8 L398.4 230.8 L398.0 230.6 L397.6 230.1 L397.4 228.9 L398.1 227.2 L398.4 226.8 L397.5 227.2 L396.0 227.8 L394.1 228.4 L392.2 229.2 L390.5 230.0 L389.0 230.8 L387.5 231.7 L385.9 232.8 L384.4 234.0 L382.9 235.8 L382.4 239.4 L384.2 242.1 L386.1 243.2 L388.0 244.0 L390.0 244.7 L392.0 245.3 L394.0 245.7 L396.0 246.1 L398.3 246.4 L400.6 246.6 L402.7 246.7 L404.5 246.8 L405.7 246.8 L407.0 246.7 L408.2 246.1 L409.1 245.0 L409.4 243.7 L409.3 242.4 L408.7 241.2 L407.6 240.3 L406.3 240.0 L405.0 239.8 L403.3 239.6 L401.3 239.4 L399.2 239.1 L397.3 238.8 L395.6 238.5 L394.0 238.0 L392.3 237.5 L390.7 236.9 L389.5 236.4 L389.1 236.2 L389.8 237.4 L389.6 239.4 L389.6 239.6 L390.3 239.0 L391.5 238.3 L392.9 237.5 L394.1 236.8 L395.3 236.2 L396.8 235.6 L398.6 235.0 L400.3 234.4 L402.0 233.6 L403.9 232.2 L405.0 229.3 L404.5 226.7 L403.1 224.9 L401.1 223.7 L398.7 223.2 L396.2 223.6 L393.8 224.6 L391.2 226.0 L388.4 227.6 L385.7 229.3 L383.4 230.7 L381.9 231.7 L380.9 232.6 L380.3 233.8 L380.2 235.2 L380.6 236.4 L381.5 237.4 L382.7 238.0 L384.1 238.1Z M374.9 292.8 L375.9 292.6 L377.3 292.2 L378.7 291.7 L380.1 291.3 L381.4 291.1 L382.5 291.0 L383.7 291.1 L385.2 291.3 L386.7 291.6 L388.1 292.0 L389.2 292.5 L389.8 292.8 L390.3 293.3 L390.8 293.9 L391.2 294.6 L391.5 295.3 L391.6 295.9 L391.6 296.5 L391.5 297.3 L391.1 298.5 L390.4 299.9 L389.6 301.4 L388.7 302.7 L387.9 303.7 L387.1 304.6 L386.0 305.4 L384.8 306.1 L383.5 306.8 L382.3 307.3 L381.5 307.6 L380.9 307.8 L380.3 307.8 L379.7 307.7 L379.1 307.5 L378.6 307.4 L378.6 307.4 L379.1 308.1 L379.3 308.5 L379.2 308.4 L379.2 307.9 L379.2 307.2 L379.1 306.6 L378.8 305.2 L377.9 304.0 L376.7 303.2 L375.3 303.0 L373.9 303.3 L372.7 304.2 L371.9 305.4 L371.7 306.8 L371.6 307.1 L371.6 307.6 L371.5 308.7 L371.6 310.1 L372.2 311.9 L373.6 313.6 L375.0 314.5 L376.3 315.1 L377.8 315.6 L379.5 315.9 L381.4 316.0 L383.3 315.8 L385.2 315.2 L387.0 314.5 L388.9 313.6 L390.8 312.5 L392.6 311.2 L394.3 309.7 L395.8 307.9 L397.1 306.0 L398.2 303.9 L399.2 301.7 L400.0 299.5 L400.4 297.1 L400.3 294.8 L399.8 292.6 L399.0 290.6 L397.9 288.8 L396.5 287.2 L394.8 285.8 L392.8 284.6 L390.7 283.9 L388.6 283.3 L386.4 283.0 L384.4 282.8 L382.3 282.8 L380.1 283.0 L378.0 283.5 L376.2 284.2 L374.6 284.8 L373.3 285.4 L372.5 285.8 L371.3 286.5 L370.4 287.7 L370.0 289.1 L370.2 290.5 L370.9 291.7 L372.1 292.6 L373.5 293.0Z"/>
<path fill="#7060cc" fill-opacity=".9" d="M210.9 240.5 L211.0 242.7 L211.4 245.7 L211.8 249.3 L212.3 253.2 L212.8 257.1 L213.2 260.9 L213.5 264.7 L213.8 268.7 L214.0 272.8 L214.3 276.9 L214.5 281.0 L214.7 284.9 L214.9 289.0 L215.1 293.3 L215.2 297.6 L215.4 301.6 L215.5 305.0 L215.8 307.4 L215.9 308.3 L216.5 309.1 L217.2 309.6 L218.1 309.7 L219.0 309.6 L219.8 309.0 L220.3 308.3 L220.4 307.4 L220.6 304.9 L220.8 301.6 L220.9 297.6 L221.0 293.2 L221.0 288.8 L220.9 284.7 L220.7 280.7 L220.6 276.5 L220.3 272.4 L220.0 268.2 L219.7 264.2 L219.2 260.3 L218.7 256.4 L218.1 252.3 L217.4 248.4 L216.7 244.8 L216.1 241.9 L215.5 239.7 L215.2 238.9 L214.6 238.2 L213.8 237.8 L212.8 237.8 L212.0 238.1 L211.3 238.7 L210.9 239.5Z M228.1 288.0 L229.9 287.9 L232.3 287.6 L235.1 287.2 L238.2 286.6 L241.3 286.0 L244.2 285.2 L247.2 284.2 L250.3 283.0 L253.3 281.8 L256.1 280.5 L258.4 279.4 L260.0 278.5 L260.8 278.0 L261.3 277.2 L261.4 276.3 L261.3 275.4 L260.8 274.6 L260.0 274.1 L259.1 274.0 L258.2 274.1 L256.4 274.6 L254.0 275.5 L251.2 276.5 L248.2 277.6 L245.2 278.7 L242.6 279.6 L239.9 280.3 L237.0 281.0 L234.0 281.7 L231.3 282.3 L228.9 282.9 L227.3 283.4 L226.4 283.7 L225.8 284.4 L225.4 285.2 L225.4 286.1 L225.7 287.0 L226.4 287.6 L227.2 288.0Z M279.5 241.5 L279.1 243.2 L278.5 245.5 L278.0 248.3 L277.4 251.2 L276.8 254.3 L276.3 257.1 L275.8 260.0 L275.2 263.2 L274.7 266.4 L274.2 269.4 L273.9 271.9 L273.7 273.8 L273.7 274.7 L274.1 275.5 L274.7 276.1 L275.6 276.5 L276.5 276.5 L277.3 276.1 L277.9 275.5 L278.3 274.6 L278.8 272.8 L279.4 270.3 L280.1 267.4 L280.7 264.2 L281.4 261.0 L281.9 258.1 L282.4 255.2 L282.9 252.2 L283.3 249.2 L283.7 246.4 L284.0 244.0 L284.1 242.3 L284.0 241.4 L283.7 240.6 L283.0 240.0 L282.2 239.6 L281.3 239.7 L280.5 240.0 L279.9 240.7Z M326.9 202.9 L327.2 203.9 L327.9 205.1 L328.7 206.5 L329.6 207.8 L330.4 209.0 L331.1 209.6 L331.7 210.3 L332.6 210.7 L333.5 210.7 L334.3 210.4 L335.0 209.8 L335.4 208.9 L335.4 208.0 L335.1 207.2 L334.8 206.2 L334.1 205.0 L333.3 203.6 L332.4 202.3 L331.6 201.1 L330.9 200.5 L330.3 199.8 L329.4 199.4 L328.5 199.4 L327.7 199.7 L327.0 200.3 L326.6 201.2 L326.6 202.1Z M325.2 226.4 L324.8 228.5 L324.6 231.3 L324.4 234.6 L324.1 238.2 L323.8 241.7 L323.4 245.1 L322.9 248.5 L322.3 252.0 L321.6 255.5 L320.9 259.1 L320.2 262.7 L319.5 266.0 L318.8 269.4 L318.1 272.9 L317.3 276.4 L316.6 279.5 L316.1 282.2 L315.8 284.2 L315.8 285.1 L316.1 285.9 L316.6 286.6 L317.4 287.0 L318.3 287.0 L319.1 286.7 L319.8 286.2 L320.2 285.4 L320.9 283.5 L321.8 280.9 L322.8 277.8 L323.8 274.4 L324.8 270.8 L325.7 267.4 L326.5 264.0 L327.2 260.4 L328.0 256.8 L328.6 253.1 L329.2 249.4 L329.6 245.9 L329.9 242.2 L330.0 238.4 L330.0 234.8 L330.0 231.4 L329.8 228.6 L329.6 226.6 L329.5 225.7 L329.0 225.0 L328.3 224.4 L327.5 224.3 L326.6 224.4 L325.9 224.9 L325.3 225.6Z M384.7 236.5 L386.3 235.7 L388.7 234.3 L391.4 232.8 L394.1 231.3 L396.5 230.1 L398.0 229.5 L398.6 229.5 L398.9 229.5 L398.9 229.6 L398.8 229.5 L398.7 229.0 L399.1 228.1 L399.1 228.0 L398.0 228.5 L396.4 229.0 L394.6 229.7 L392.8 230.4 L391.1 231.2 L389.7 232.0 L388.2 232.9 L386.7 233.9 L385.3 235.0 L384.1 236.5 L383.7 239.1 L385.1 241.0 L386.7 242.0 L388.5 242.8 L390.4 243.4 L392.4 244.0 L394.3 244.4 L396.3 244.8 L398.5 245.1 L400.7 245.3 L402.8 245.4 L404.6 245.5 L405.8 245.5 L406.6 245.4 L407.3 245.0 L407.9 244.4 L408.1 243.6 L408.0 242.8 L407.6 242.1 L407.0 241.5 L406.2 241.3 L404.9 241.1 L403.2 240.9 L401.2 240.7 L399.0 240.5 L397.0 240.1 L395.3 239.8 L393.7 239.3 L391.9 238.8 L390.2 238.2 L388.9 237.6 L388.2 237.2 L388.5 237.7 L388.4 238.8 L388.7 238.6 L389.5 237.9 L390.8 237.1 L392.2 236.3 L393.5 235.6 L394.7 235.0 L396.3 234.4 L398.1 233.7 L399.8 233.1 L401.4 232.4 L402.9 231.3 L403.7 229.2 L403.3 227.3 L402.2 225.9 L400.6 225.0 L398.7 224.6 L396.6 224.9 L394.4 225.8 L391.8 227.1 L389.1 228.8 L386.4 230.4 L384.1 231.9 L382.5 232.9 L381.9 233.4 L381.6 234.2 L381.5 235.0 L381.8 235.8 L382.3 236.4 L383.1 236.7 L383.9 236.8Z M374.5 291.5 L375.5 291.3 L376.8 290.9 L378.3 290.4 L379.8 290.0 L381.2 289.8 L382.5 289.7 L383.8 289.8 L385.4 290.0 L387.0 290.3 L388.5 290.7 L389.7 291.2 L390.6 291.7 L391.2 292.3 L391.9 293.1 L392.4 294.0 L392.7 294.9 L392.9 295.7 L393.0 296.6 L392.8 297.6 L392.3 299.0 L391.6 300.5 L390.7 302.1 L389.8 303.5 L388.9 304.7 L387.9 305.6 L386.8 306.5 L385.4 307.3 L384.1 308.0 L382.8 308.6 L381.8 308.9 L381.0 309.1 L380.2 309.1 L379.4 309.0 L378.6 308.8 L378.0 308.6 L377.8 308.5 L377.9 308.7 L377.9 308.8 L377.9 308.4 L377.8 307.9 L377.8 307.2 L377.7 306.6 L377.5 305.7 L377.0 305.0 L376.2 304.5 L375.3 304.4 L374.4 304.6 L373.7 305.1 L373.2 305.9 L373.1 306.8 L373.0 307.1 L372.9 307.7 L372.8 308.6 L372.9 309.8 L373.4 311.2 L374.4 312.5 L375.6 313.3 L376.8 313.8 L378.1 314.3 L379.6 314.6 L381.3 314.7 L383.0 314.5 L384.7 314.0 L386.5 313.3 L388.2 312.5 L390.0 311.4 L391.8 310.2 L393.3 308.7 L394.7 307.1 L395.9 305.3 L397.0 303.3 L398.0 301.2 L398.7 299.1 L399.0 297.0 L399.0 295.0 L398.5 293.0 L397.8 291.2 L396.8 289.6 L395.5 288.1 L394.0 286.9 L392.3 285.9 L390.3 285.1 L388.3 284.6 L386.2 284.3 L384.3 284.1 L382.3 284.1 L380.3 284.3 L378.4 284.8 L376.6 285.5 L375.0 286.1 L373.8 286.7 L372.9 287.1 L372.2 287.5 L371.6 288.3 L371.4 289.1 L371.5 290.1 L371.9 290.8 L372.7 291.4 L373.5 291.6Z"/>
<path fill="#ee5a5e" d="M211.8 240.3 L212.0 242.5 L212.3 245.6 L212.8 249.1 L213.2 253.0 L213.7 257.0 L214.1 260.8 L214.4 264.6 L214.7 268.6 L215.0 272.7 L215.2 276.8 L215.5 280.9 L215.7 284.9 L215.9 289.0 L216.0 293.3 L216.2 297.6 L216.3 301.6 L216.5 305.0 L216.7 307.4 L216.8 307.9 L217.1 308.4 L217.6 308.7 L218.1 308.8 L218.6 308.7 L219.1 308.4 L219.4 307.9 L219.5 307.4 L219.7 305.0 L219.8 301.6 L219.9 297.6 L220.0 293.3 L220.0 288.9 L219.9 284.7 L219.8 280.7 L219.6 276.6 L219.4 272.4 L219.1 268.3 L218.7 264.3 L218.3 260.4 L217.8 256.5 L217.1 252.5 L216.4 248.6 L215.7 245.0 L215.1 242.0 L214.6 239.9 L214.4 239.4 L214.0 239.0 L213.5 238.7 L213.0 238.7 L212.5 238.9 L212.1 239.3 L211.8 239.8Z M228.0 287.1 L229.7 287.0 L232.1 286.7 L234.9 286.2 L238.0 285.7 L241.1 285.1 L244.0 284.3 L246.9 283.4 L249.9 282.2 L252.9 280.9 L255.7 279.6 L258.0 278.5 L259.6 277.6 L260.1 277.3 L260.4 276.8 L260.5 276.3 L260.4 275.8 L260.1 275.3 L259.6 275.0 L259.1 274.9 L258.6 275.0 L256.8 275.5 L254.4 276.4 L251.5 277.4 L248.5 278.5 L245.5 279.6 L242.8 280.5 L240.1 281.2 L237.2 281.9 L234.2 282.6 L231.5 283.2 L229.1 283.8 L227.4 284.3 L226.9 284.5 L226.5 284.9 L226.3 285.4 L226.3 286.0 L226.5 286.5 L226.9 286.9 L227.4 287.1Z M280.5 241.7 L280.0 243.3 L279.5 245.7 L278.9 248.4 L278.3 251.4 L277.7 254.4 L277.2 257.3 L276.7 260.2 L276.2 263.3 L275.6 266.6 L275.2 269.6 L274.8 272.1 L274.7 274.0 L274.7 274.5 L274.9 275.0 L275.3 275.3 L275.8 275.5 L276.3 275.5 L276.8 275.3 L277.1 274.9 L277.3 274.4 L277.9 272.7 L278.5 270.2 L279.1 267.2 L279.8 264.0 L280.4 260.8 L281.0 257.9 L281.5 255.1 L281.9 252.0 L282.4 249.0 L282.8 246.2 L283.0 243.9 L283.1 242.1 L283.1 241.6 L282.9 241.1 L282.5 240.8 L282.0 240.6 L281.5 240.6 L281.0 240.8 L280.7 241.2Z M327.7 202.4 L328.0 203.4 L328.7 204.6 L329.5 206.0 L330.4 207.3 L331.2 208.5 L331.9 209.1 L332.3 209.5 L332.8 209.8 L333.3 209.8 L333.8 209.6 L334.2 209.2 L334.5 208.7 L334.5 208.2 L334.3 207.7 L334.0 206.7 L333.3 205.5 L332.5 204.1 L331.6 202.8 L330.8 201.6 L330.1 201.0 L329.7 200.6 L329.2 200.3 L328.7 200.3 L328.2 200.5 L327.8 200.9 L327.5 201.4 L327.5 201.9Z M326.1 226.5 L325.8 228.5 L325.5 231.3 L325.3 234.6 L325.0 238.2 L324.7 241.8 L324.3 245.2 L323.8 248.6 L323.2 252.1 L322.5 255.7 L321.8 259.3 L321.1 262.9 L320.5 266.2 L319.8 269.6 L319.0 273.1 L318.2 276.6 L317.5 279.8 L317.0 282.5 L316.7 284.5 L316.7 285.0 L316.9 285.5 L317.2 285.8 L317.7 286.1 L318.2 286.1 L318.7 285.9 L319.0 285.6 L319.3 285.1 L320.0 283.3 L320.9 280.7 L321.9 277.6 L322.9 274.1 L323.9 270.6 L324.7 267.2 L325.5 263.8 L326.3 260.2 L327.0 256.6 L327.7 252.9 L328.3 249.3 L328.7 245.8 L329.0 242.1 L329.1 238.4 L329.1 234.7 L329.0 231.4 L328.9 228.6 L328.7 226.5 L328.6 226.0 L328.3 225.6 L327.9 225.3 L327.4 225.2 L326.9 225.3 L326.5 225.6 L326.2 226.0Z M384.2 235.7 L385.8 234.8 L388.2 233.5 L390.9 232.0 L393.6 230.5 L396.1 229.3 L397.7 228.6 L398.6 228.5 L399.2 228.7 L399.6 228.9 L399.7 229.1 L399.7 229.0 L399.8 228.7 L399.5 228.9 L398.4 229.4 L396.8 229.9 L394.9 230.6 L393.1 231.3 L391.6 232.0 L390.2 232.8 L388.7 233.7 L387.2 234.6 L385.9 235.7 L384.9 236.9 L384.6 238.8 L385.7 240.3 L387.1 241.2 L388.8 241.9 L390.7 242.5 L392.6 243.0 L394.5 243.5 L396.4 243.9 L398.6 244.1 L400.8 244.3 L402.9 244.4 L404.7 244.5 L405.9 244.5 L406.3 244.5 L406.7 244.3 L407.0 243.9 L407.1 243.5 L407.1 243.1 L406.9 242.7 L406.5 242.4 L406.1 242.3 L404.9 242.1 L403.1 241.9 L401.1 241.7 L398.9 241.4 L396.9 241.1 L395.1 240.7 L393.4 240.2 L391.6 239.7 L389.9 239.1 L388.5 238.5 L387.6 238.0 L387.6 238.0 L387.6 238.4 L388.0 237.9 L389.0 237.2 L390.3 236.3 L391.7 235.5 L393.0 234.8 L394.4 234.1 L396.0 233.5 L397.8 232.8 L399.5 232.2 L401.0 231.6 L402.2 230.7 L402.7 229.2 L402.4 227.7 L401.5 226.6 L400.3 225.8 L398.7 225.5 L396.9 225.8 L394.8 226.6 L392.3 228.0 L389.5 229.6 L386.8 231.3 L384.6 232.7 L383.0 233.7 L382.7 234.0 L382.5 234.4 L382.5 234.9 L382.6 235.3 L382.9 235.6 L383.3 235.8 L383.8 235.8Z M374.2 290.6 L375.1 290.4 L376.5 290.0 L378.0 289.5 L379.5 289.1 L381.1 288.8 L382.4 288.7 L383.9 288.8 L385.6 289.1 L387.2 289.4 L388.8 289.8 L390.1 290.4 L391.1 291.0 L391.9 291.7 L392.6 292.5 L393.2 293.5 L393.6 294.6 L393.9 295.6 L393.9 296.6 L393.7 297.8 L393.2 299.3 L392.5 301.0 L391.6 302.6 L390.6 304.1 L389.6 305.3 L388.5 306.3 L387.3 307.3 L385.9 308.2 L384.5 308.9 L383.1 309.5 L382.0 309.9 L381.0 310.0 L380.1 310.1 L379.2 309.9 L378.3 309.7 L377.6 309.4 L377.2 309.2 L377.1 309.2 L377.0 309.0 L376.9 308.5 L376.9 307.8 L376.9 307.2 L376.8 306.7 L376.7 306.1 L376.4 305.7 L375.9 305.4 L375.4 305.3 L374.8 305.4 L374.4 305.7 L374.1 306.2 L374.0 306.7 L373.9 307.1 L373.9 307.7 L373.8 308.6 L373.8 309.6 L374.2 310.8 L375.0 311.8 L376.0 312.4 L377.1 313.0 L378.3 313.4 L379.7 313.7 L381.3 313.7 L382.8 313.5 L384.4 313.1 L386.1 312.4 L387.8 311.6 L389.5 310.6 L391.1 309.4 L392.6 308.1 L393.9 306.5 L395.1 304.8 L396.2 302.9 L397.1 300.9 L397.8 298.9 L398.1 297.0 L398.0 295.1 L397.6 293.3 L396.9 291.6 L396.0 290.1 L394.8 288.8 L393.5 287.6 L391.9 286.7 L390.0 286.1 L388.1 285.6 L386.1 285.3 L384.2 285.1 L382.4 285.1 L380.5 285.3 L378.6 285.8 L376.9 286.4 L375.4 287.0 L374.1 287.6 L373.2 288.0 L372.8 288.2 L372.4 288.7 L372.3 289.2 L372.4 289.8 L372.6 290.2 L373.1 290.6 L373.6 290.7Z"/>
</g>
<g fill="none" stroke="#7f9df5" stroke-width=".8">
<rect x="211" y="193.5" width="211" height="122.5"/>
<g fill="#fff"><circle cx="211" cy="193.5" r="1.500"/><circle cx="316.5" cy="193.5" r="1.500"/><circle cx="422" cy="193.5" r="1.500"/><circle cx="211" cy="254.7" r="1.500"/><circle cx="422" cy="254.7" r="1.500"/><circle cx="211" cy="316" r="1.500"/><circle cx="316.5" cy="316" r="1.500"/><circle cx="422" cy="316" r="1.500"/></g>
</g>
</svg>
<div id="vscroll" class="a"></div>
<div class="a" style="left:843.600px;top:60.600px;width:5.2px;height:3.8px;background:#f4f4f4;clip-path:polygon(50% 0,100% 100%,0 100%)"></div>
<div class="a" style="left:843.600px;top:545.600px;width:5.2px;height:3.8px;background:#f4f4f4;clip-path:polygon(0 0,100% 0,50% 100%)"></div>
<div class="a" style="left:843.300px;top:296.500px;width:7px;height:7.500px;background:#7c7c7c;box-shadow:inset 0 0 0 .5px #999"></div>
<div id="status" class="a"></div>
<div class="a" style="left:39.500px;top:552px;width:223px;height:8.500px;background:#404040"></div>
<div class="fld" style="left:41px;top:552.800px;width:26.500px;height:7.500px;font-size:6.400px;line-height:7.700px;padding-left:1.500px">600%</div>
<div class="dd sdd" style="left:69px;top:552.800px;height:7.500px;width:6px"></div>
<svg class="ic" style="left:80px;top:554.500px" width="14" height="4.500" viewBox="0 0 28 9"><path fill="#6c6c6c" d="M0 0h1.800v9H0zM9 0v9L2.500 4.500zM26 0v9l-6.500-4.500z"/></svg>
<div class="fld" style="left:98.500px;top:552.800px;width:21px;height:7.500px;font-size:6.400px;line-height:7.700px;padding-left:2px">1</div>
<div class="dd sdd" style="left:121px;top:552.800px;height:7.500px;width:6px"></div>
<svg class="ic" style="left:132px;top:554.500px" width="14" height="4.500" viewBox="0 0 28 9"><path fill="#6c6c6c" d="M2 0v9l6.500-4.500zM17 0v9l6.500-4.500zM24.500 0h1.800v9h-1.800z"/></svg>
<span class="t" style="left:190.500px;top:553.700px;font-size:5.800px;color:#ececec">切換選取</span>
<div class="a" style="left:257px;top:554.300px;width:3px;height:4.4px;background:#f0f0f0;clip-path:polygon(0 0,100% 50%,0 100%)"></div>
<div class="a" style="left:262.500px;top:552px;width:2.500px;height:8.500px;background:#262626"></div>
<div class="a" style="left:266.500px;top:554.300px;width:3px;height:4.4px;background:#f0f0f0;clip-path:polygon(100% 0,100% 100%,0 50%)"></div>
<div class="a" style="left:544px;top:553px;width:7px;height:7px;background:#7c7c7c;box-shadow:inset 0 0 0 .5px #999"></div>
<div class="a" style="left:835px;top:554.300px;width:3px;height:4.4px;background:#f0f0f0;clip-path:polygon(0 0,100% 50%,0 100%)"></div>
<div class="a" style="left:842.500px;top:552.500px;width:8px;height:7.500px;background:#464646"></div>
<div class="a" style="left:0;top:560.500px;width:1000px;height:2.500px;background:linear-gradient(90deg,#1d2733 0,#16202c 40%,#1c1f24 85%,#202020 100%)"></div>
<!--DOCK-->
<div class="a" style="left:850.5px;top:47px;width:149.5px;height:513.5px;background:#2b2b2b;"></div>
<div class="a" style="left:852px;top:47.2px;width:148px;height:6.5px;background:#2e2e2e;"></div>
<svg class="ic" style="left:865px;top:49.700px" width="4" height="2.600" viewBox="0 0 8 5"><path fill="#c8c8c8" d="M3.500 0v5L0 2.500zM8 0v5L4.500 2.500z"/></svg>
<svg class="ic" style="left:993.500px;top:49.700px" width="4" height="2.600" viewBox="0 0 8 5"><path fill="#c8c8c8" d="M0 0v5l3.500-2.500zM4.500 0v5L8 2.500z"/></svg>
<div class="a" style="left:852px;top:53.8px;width:19px;height:35.4px;background:#484848;"></div>
<div class="a" style="left:852px;top:90.3px;width:19px;height:34.4px;background:#484848;"></div>
<div class="a" style="left:852px;top:125.8px;width:19px;height:434.7px;background:#484848;"></div>
<div class="a" style="left:857px;top:56px;width:9.5px;height:1.5px;background:#2a2a2a;border-radius:.5px"></div>
<div class="a" style="left:857px;top:92.3px;width:9.5px;height:1.5px;background:#2a2a2a;border-radius:.5px"></div>
<svg class="ic" style="left:856.500px;top:61.500px" width="10" height="10" viewBox="0 0 20 20"><g stroke="#d6d6d6" stroke-width="1.600"><path d="M10 0v20M0 10h20M3 3l14 14M17 3L3 17"/></g><circle cx="10" cy="10" r="5" fill="#484848" stroke="#d6d6d6" stroke-width="1.500"/><circle cx="10" cy="10" r="1.800" fill="#d6d6d6"/></svg>
<svg class="ic" style="left:856.800px;top:76.300px" width="9.600" height="9.600" viewBox="0 0 20 20"><circle cx="10" cy="10" r="9.500" fill="#d2d2d2"/><rect x="8.300" y="8.500" width="3.600" height="7.500" fill="#3a3a3a"/><circle cx="10" cy="5.300" r="2" fill="#3a3a3a"/><rect x="7" y="8.500" width="3" height="1.500" fill="#3a3a3a"/><rect x="7" y="14.500" width="6.200" height="1.500" fill="#3a3a3a"/></svg>
<svg class="ic" style="left:856.800px;top:97.700px" width="9.600" height="9.600" viewBox="0 0 20 20"><circle cx="10" cy="10" r="8.500" fill="none" stroke="#cfcfcf" stroke-width="2" stroke-dasharray="2.200 1.300"/><circle cx="10" cy="10" r="5.500" fill="#e2e2e2"/></svg>
<svg class="ic" style="left:857px;top:112.300px" width="10" height="10" viewBox="0 0 20 20"><rect x="6" y="1.500" width="12.500" height="12.500" rx="1.500" fill="none" stroke="#d0d0d0" stroke-width="1.700"/><ellipse cx="6.500" cy="13.500" rx="5.500" ry="4.500" fill="#484848" stroke="#d0d0d0" stroke-width="1.600"/><path stroke="#d0d0d0" stroke-width="1.200" d="M1.500 12.500c3 2 7 2 10 0"/></svg>
<div class="a" style="left:872.5px;top:53.8px;width:127.5px;height:42.8px;background:#4a4a4a;"></div>
<div class="a" style="left:872.5px;top:53.8px;width:127.5px;height:8.7px;background:#323232;"></div>
<div class="a" style="left:873px;top:53.8px;width:21px;height:8.7px;background:#4a4a4a;box-shadow:inset 0 .5px 0 #5a5a5a"></div>
<svg class="ic" style="left:875px;top:55.8px" width="2.600" height="5" viewBox="0 0 5 10"><path fill="none" stroke="#d0d0d0" stroke-width="1" d="M.5 4l2-3 2 3M.5 6l2 3 2-3"/></svg>
<span class="t b" style="left:879.2px;top:56.1px;font-size:5.7px;color:#ececec;">顏色</span>
<svg class="ic" style="left:990px;top:56.5px" width="7.500" height="4" viewBox="0 0 15 8"><path fill="#d8d8d8" d="M0 1.500h3.500L1.700 4z"/><path stroke="#9a9a9a" stroke-width="1.300" d="M5 1h10M5 4h10M5 7h10"/></svg>
<div class="a" style="left:875.500px;top:68px;width:6.600px;height:7px;background:linear-gradient(135deg,#fff 0,#fff 40%,#e8232a 41%,#e8232a 59%,#fff 60%,#fff 100%);box-shadow:0 0 0 .5px #222"></div>
<div class="a" style="left:882.1px;top:68px;width:6.7px;height:7px;background:#000;"></div>
<div class="a" style="left:888.8px;top:68px;width:6.7px;height:7px;background:#fff;box-shadow:0 0 0 .5px #222"></div>
<div class="a" style="left:876px;top:80.500px;width:114px;height:12.500px;background:linear-gradient(180deg,#fff 0,rgba(255,255,255,0) 45%,rgba(0,0,0,0) 55%,#000 100%),linear-gradient(90deg,#e8141c 0,#f0e020 16%,#28b030 33%,#20c8e8 52%,#2030a8 66%,#d020a0 84%,#e8141c 100%);box-shadow:0 0 0 .5px #2a2a2a"></div>
<svg class="ic" style="left:993px;top:90px" width="5" height="5" viewBox="0 0 10 10"><path stroke="#6e6e6e" stroke-width="1" d="M10 1L1 10M10 4.500L4.500 10M10 8L8 10"/></svg>
<div class="a" style="left:872.5px;top:98px;width:127.5px;height:159.5px;background:#484848;"></div>
<div class="a" style="left:872.5px;top:98px;width:127.5px;height:8.6px;background:#323232;"></div>
<div class="a" style="left:874px;top:98.3px;width:16px;height:8.3px;background:#3e3e3e;"></div>
<span class="t" style="left:876.4px;top:100.7px;font-size:5.3px;color:#b8b8b8;">色票</span>
<div class="a" style="left:891.5px;top:98px;width:23.5px;height:8.6px;background:#4a4a4a;box-shadow:inset 0 .5px 0 #5a5a5a"></div>
<span class="t b" style="left:895px;top:99.9px;font-size:5.55px;color:#ececec;">資料庫</span>
<svg class="ic" style="left:990px;top:100.5px" width="7.500" height="4" viewBox="0 0 15 8"><path fill="#d8d8d8" d="M0 1.500h3.500L1.700 4z"/><path stroke="#9a9a9a" stroke-width="1.300" d="M5 1h10M5 4h10M5 7h10"/></svg>
<div class="a" style="left:872.5px;top:106.6px;width:127.5px;height:28px;background:#4a4a4a;"></div>
<div class="a" style="left:877px;top:109.5px;width:90px;height:8.7px;background:#3b3b3b;border-radius:.8px;box-shadow:inset 0 0 0 .5px #2a2a2a,0 .5px 0 #5a5a5a"></div>
<span class="t b" style="left:882px;top:112px;font-size:5.75px;color:#f2f2f2;">Charles-fb (已復原)</span>
<div class="a" style="left:961.8px;top:112.7px;width:3.8px;height:2.8px;background:#f0f0f0;clip-path:polygon(0 0,100% 0,50% 100%)"></div>
<div class="a" style="left:972.5px;top:109.5px;width:9.2px;height:8.7px;background:#1a1a1a;border-radius:.5px"></div>
<svg class="ic" style="left:974.300px;top:111.200px" width="5.600" height="5.400" viewBox="0 0 11 11"><path fill="#f4f4f4" d="M0 0h4.800v4.800H0zM6.200 0H11v4.800H6.200zM0 6.200h4.800V11H0zM6.200 6.200H11V11H6.200z"/></svg>
<div class="a" style="left:986.3px;top:110.5px;width:6.7px;height:6.7px;background:#8e8e8e;box-shadow:inset 0 0 0 .5px #a5a5a5"></div>
<div class="a" style="left:877px;top:121.5px;width:107.5px;height:11px;background:#a1a1a1;border-radius:.8px;box-shadow:inset 0 0 0 .5px #2f2f2f,inset 0 .6px 0 #c2c2c2"></div>
<svg class="ic" style="left:879.200px;top:124.200px" width="5.600" height="5.800" viewBox="0 0 11 11.500"><circle cx="4.500" cy="4.500" r="3.400" fill="none" stroke="#4a4a4a" stroke-width="1.300"/><path stroke="#4a4a4a" stroke-width="1.500" d="M7 7l3.500 3.800"/></svg>
<span class="t" style="left:887px;top:124.7px;font-size:6.6px;color:#7c7c7c;">搜尋 Adobe Stock</span>
<div class="a" style="left:986.5px;top:122px;width:7.8px;height:10.2px;background:#333;border-radius:.6px;box-shadow:inset 0 0 0 .5px #262626"></div>
<div class="a" style="left:988.5px;top:125.8px;width:3.8px;height:2.8px;background:#f2f2f2;clip-path:polygon(0 0,100% 0,50% 100%)"></div>
<div class="a" style="left:872.5px;top:134.6px;width:127.5px;height:1.2px;background:#333;"></div>
<div class="a" style="left:991.8px;top:136px;width:8.2px;height:108.8px;background:#3c3c3c;"></div>
<div class="a" style="left:993.600px;top:139.800px;width:4.6px;height:2.8px;background:#f0f0f0;clip-path:polygon(50% 0,100% 100%,0 100%)"></div>
<div class="a" style="left:993px;top:144.5px;width:6.3px;height:11px;background:#8a8a8a;box-shadow:inset 0 0 0 .5px #a0a0a0"></div>
<div class="a" style="left:993.8px;top:240.3px;width:3.8px;height:2.8px;background:#f0f0f0;clip-path:polygon(0 0,100% 0,50% 100%)"></div>
<div class="a" style="left:878px;top:145.4px;width:3.8px;height:2.8px;background:#d4d4d4;clip-path:polygon(0 0,100% 0,50% 100%)"></div>
<span class="t" style="left:884px;top:144.7px;font-size:5.9px;color:#d2d2d2;">色彩</span>
<div class="a" style="left:878px;top:153.7px;width:34.7px;height:22.5px;background:#f25558;box-shadow:0 0 0 .5px #3a4648"></div>
<div class="a" style="left:878px;top:185.3px;width:3.8px;height:2.8px;background:#d4d4d4;clip-path:polygon(0 0,100% 0,50% 100%)"></div>
<span class="t" style="left:884px;top:184.9px;font-size:5.9px;color:#d2d2d2;">字元樣式</span>
<div class="a" style="left:878px;top:193.8px;width:34.7px;height:23.2px;background:#fff;"></div>
<div class="a" style="left:905.9px;top:195.7px;width:5.6px;height:2.6px;background:#222;border-radius:.8px"></div>
<span class="t" style="left:884.8px;top:196px;font-size:20.800px;color:#000;transform:scaleX(.8);transform-origin:0 0;-webkit-text-stroke:.4px #000">Aa</span>
<svg class="ic" style="left:904.3px;top:209.300px" width="7" height="6.800" viewBox="0 0 14 13.500"><path fill="#f6c12a" d="M7 .5l6.700 12.500H.3z"/><path stroke="#fff" stroke-width="1.500" d="M7 4.500v4.500M7 10v1.600"/></svg>
<div class="a" style="left:914.5px;top:193.8px;width:34.7px;height:23.2px;background:#fff;"></div>
<div class="a" style="left:942.4px;top:195.7px;width:5.6px;height:2.6px;background:#222;border-radius:.8px"></div>
<span class="t b" style="left:920.8px;top:196.300px;font-size:20.500px;color:#000;transform:scaleX(.74);transform-origin:0 0;-webkit-text-stroke:1.100px #000;letter-spacing:.5px">Aa</span>
<svg class="ic" style="left:940.8px;top:209.300px" width="7" height="6.800" viewBox="0 0 14 13.500"><path fill="#f6c12a" d="M7 .5l6.700 12.500H.3z"/><path stroke="#fff" stroke-width="1.500" d="M7 4.500v4.500M7 10v1.600"/></svg>
<div class="a" style="left:951px;top:193.8px;width:34.7px;height:23.2px;background:#fff;"></div>
<div class="a" style="left:978.9px;top:195.7px;width:5.6px;height:2.6px;background:#222;border-radius:.8px"></div>
<span class="t" style="left:957.8px;top:196px;font-size:20.800px;color:#000;transform:scaleX(.8);transform-origin:0 0;-webkit-text-stroke:.4px #000">Aa</span>
<div class="a" style="left:878px;top:225.4px;width:3.8px;height:2.8px;background:#d4d4d4;clip-path:polygon(0 0,100% 0,50% 100%)"></div>
<span class="t" style="left:884px;top:224.9px;font-size:5.9px;color:#d2d2d2;">圖形</span>
<div class="a" style="left:878px;top:234.5px;width:53px;height:10.3px;background:#dedede;"></div>
<div class="a" style="left:933px;top:234.5px;width:53px;height:10.3px;background:#dedede;"></div>
<svg class="ic" style="left:878px;top:234.500px" width="108" height="10.300" viewBox="0 0 108 10.300"><path fill="#0a0a0a" stroke="#0a0a0a" stroke-width="1.300" d="M17 0c1 4 2.500 7.500 5 10.300h3C28.500 9 32 6 34.500 3.500 31 5.500 27 8 24.500 9 22 6.500 20.500 3.500 19.500 0z"/><path fill="#151515" d="M68 10.300c0-2.500 1-4 4-5l-2-.8 5-1.200-1.500-1 6-.8L79 .5l6 .8 2-1.300.5 2 4-.5-2 2.300 3.500.5-2.500 1.700 3 1-2.500 1.300.5 2z"/><path fill="#f1c9a5" d="M76 10.300c1.500-1.800 4-2.600 7.500-2.600s6 .8 7.500 2.600z"/></svg>
<div class="a" style="left:872.5px;top:244.8px;width:127.5px;height:12.7px;background:#484848;box-shadow:inset 0 .6px 0 #333"></div>
<svg class="ic" style="left:878px;top:247.500px" width="8.500" height="8" viewBox="0 0 17 16"><path fill="#d8d8d8" d="M9.500 1L16 9.500 8 15 1.500 7z"/><path fill="#484848" d="M9.300 4L13 9l-4.500 3L5 7.500z"/><path fill="#d8d8d8" d="M1 9c-1.500 2.500-1 5 .8 5s2-2.500-.8-5z"/><path stroke="#d8d8d8" stroke-width="1.200" d="M5 1.500l5 7"/></svg>
<span class="t" style="left:891.3px;top:247.5px;font-size:9.3px;color:#8f8f8f;font-family:'Liberation Serif',serif">A</span>
<span class="t" style="left:904.3px;top:247.7px;font-size:8.5px;color:#727272;">¶</span>
<div class="a" style="left:916.5px;top:248px;width:7.5px;height:7.5px;background:#ee5053;box-shadow:inset 0 0 0 .6px #f58a8a"></div>
<div class="a" style="left:929px;top:248px;width:7.5px;height:7.5px;background:#de454a;box-shadow:inset 0 0 0 .6px #ef7d80"></div>
<svg class="ic" style="left:973.500px;top:248.300px" width="10" height="7" viewBox="0 0 20 14"><path fill="none" stroke="#d4d4d4" stroke-width="1.700" d="M5.500 12.500C2.500 12.500 1 10.800 1 8.500s2-4 4-3.700C6 2.500 8 1 11 1s5.500 2 5.800 4.500c1.500.4 2.400 1.700 2.400 3.300 0 2-1.500 3.700-4 3.700z"/><circle cx="8.500" cy="8" r="2.600" fill="none" stroke="#d4d4d4" stroke-width="1.300"/><circle cx="12.500" cy="8" r="2.600" fill="none" stroke="#d4d4d4" stroke-width="1.300"/></svg>
<svg class="ic" style="left:987.500px;top:247.500px" width="6.500" height="8" viewBox="0 0 13 16"><path fill="#6a6a6a" d="M0 2.500h13V4H0zM4 .5h5v2H4zM1.300 5h10.400l-1 11H2.300z"/></svg>
<div class="a" style="left:872.5px;top:258.6px;width:127.5px;height:9px;background:#323232;"></div>
<div class="a" style="left:873px;top:258.6px;width:31.5px;height:9px;background:#4a4a4a;box-shadow:inset 0 .5px 0 #5a5a5a"></div>
<svg class="ic" style="left:875px;top:261.3px" width="2.600" height="5" viewBox="0 0 5 10"><path fill="none" stroke="#d0d0d0" stroke-width="1" d="M.5 4l2-3 2 3M.5 6l2 3 2-3"/></svg>
<span class="t b" style="left:879px;top:261.5px;font-size:5.9px;color:#ececec;">色彩參考</span>
<svg class="ic" style="left:990px;top:261.3px" width="7.500" height="4" viewBox="0 0 15 8"><path fill="#d8d8d8" d="M0 1.500h3.500L1.700 4z"/><path stroke="#9a9a9a" stroke-width="1.300" d="M5 1h10M5 4h10M5 7h10"/></svg>
<div class="a" style="left:872.5px;top:269px;width:127.5px;height:108.5px;background:#4a4a4a;"></div>
<div class="a" style="left:872.5px;top:269px;width:127.5px;height:9.5px;background:#323232;"></div>
<div class="a" style="left:874px;top:269.3px;width:15px;height:9.2px;background:#3e3e3e;"></div>
<span class="t" style="left:876.5px;top:272px;font-size:5.3px;color:#b0b0b0;">筆刷</span>
<div class="a" style="left:890.5px;top:269px;width:21.5px;height:9.5px;background:#4a4a4a;box-shadow:inset 0 .5px 0 #5a5a5a"></div>
<svg class="ic" style="left:892.5px;top:271.3px" width="2.600" height="5" viewBox="0 0 5 10"><path fill="none" stroke="#d0d0d0" stroke-width="1" d="M.5 4l2-3 2 3M.5 6l2 3 2-3"/></svg>
<span class="t b" style="left:897px;top:271.5px;font-size:6px;color:#ececec;">筆畫</span>
<div class="a" style="left:913px;top:269.3px;width:17px;height:9.2px;background:#3e3e3e;"></div>
<span class="t" style="left:916px;top:272px;font-size:5.5px;color:#b0b0b0;">符號</span>
<svg class="ic" style="left:990px;top:272px" width="7.500" height="4" viewBox="0 0 15 8"><path fill="#d8d8d8" d="M0 1.500h3.500L1.700 4z"/><path stroke="#9a9a9a" stroke-width="1.300" d="M5 1h10M5 4h10M5 7h10"/></svg>
<span class="t b" style="left:888.5px;top:284.7px;font-size:6.6px;color:#ececec;">寬度:</span>
<div class="stp" style="left:907px;top:283px"></div>
<div class="fld" style="left:915px;top:283px;width:35.700px">1 pt</div>
<div class="dd" style="left:952px;top:283px"></div>
<span class="t b" style="left:888.5px;top:298.2px;font-size:6.6px;color:#ececec;">端點:</span>
<div class="a" style="left:907px;top:296.5px;width:11px;height:9.2px;background:#2a2a2a;border-radius:.6px;box-shadow:inset 0 0 0 .6px #1e1e1e"></div>
<div class="a" style="left:919.5px;top:296.5px;width:11px;height:9.2px;background:#5c5c5c;border-radius:.6px;box-shadow:inset 0 0 0 .6px #787878"></div>
<div class="a" style="left:932px;top:296.5px;width:11px;height:9.2px;background:#5c5c5c;border-radius:.6px;box-shadow:inset 0 0 0 .6px #787878"></div>
<svg class="ic" style="left:907px;top:296.500px" width="36" height="9.200" viewBox="0 0 72 18.400"><g fill="none" stroke="#f0f0f0" stroke-width="2.200"><path d="M17 5H9v8.500h8"/><path d="M42 5h-6a4.200 4.200 0 0 0 0 8.500h6"/><path d="M67 5H56.500v8.500H67"/></g><g stroke="#f0f0f0" stroke-width="1"><path d="M12 9.200h6M37 9.200h6M61 9.200h6"/></g></svg>
<span class="t b" style="left:888.5px;top:312.7px;font-size:6.6px;color:#ececec;">尖角:</span>
<div class="a" style="left:907px;top:311px;width:11px;height:9.2px;background:#2a2a2a;border-radius:.6px;box-shadow:inset 0 0 0 .6px #1e1e1e"></div>
<div class="a" style="left:919.5px;top:311px;width:11px;height:9.2px;background:#5c5c5c;border-radius:.6px;box-shadow:inset 0 0 0 .6px #787878"></div>
<div class="a" style="left:932px;top:311px;width:11px;height:9.2px;background:#5c5c5c;border-radius:.6px;box-shadow:inset 0 0 0 .6px #787878"></div>
<svg class="ic" style="left:907px;top:311px" width="36" height="9.200" viewBox="0 0 72 18.400"><g fill="none" stroke="#f0f0f0" stroke-width="2.200"><path d="M7.500 15V5.500H17"/><path d="M32.500 15v-5c0-3 2-4.500 4.500-4.500h5"/><path d="M57.500 15V9.500l4-4H67"/></g><g stroke="#f0f0f0" stroke-width="1" stroke-dasharray="1.500 1.200"><path d="M12 15V10h5M37 15V10h5M62 15V10h5"/></g></svg>
<span class="t b" style="left:947.5px;top:312.7px;font-size:6.6px;color:#ececec;">限度:</span>
<div class="fld" style="left:967px;top:311px;width:23.700px">4</div>
<span class="t" style="left:992.8px;top:313px;font-size:6.6px;color:#e0e0e0;">x</span>
<span class="t b" style="left:875px;top:327px;font-size:6.6px;color:#ececec;">對齊筆畫:</span>
<div class="a" style="left:907px;top:325.2px;width:11px;height:9.2px;background:#2a2a2a;border-radius:.6px;box-shadow:inset 0 0 0 .6px #1e1e1e"></div>
<div class="a" style="left:919.5px;top:325.2px;width:11px;height:9.2px;background:#4f4f4f;border-radius:.6px;box-shadow:inset 0 0 0 .6px #626262"></div>
<div class="a" style="left:932px;top:325.2px;width:11px;height:9.2px;background:#4f4f4f;border-radius:.6px;box-shadow:inset 0 0 0 .6px #626262"></div>
<svg class="ic" style="left:907px;top:325.200px" width="36" height="9.200" viewBox="0 0 72 18.400"><g fill="none" stroke-width="1.800"><path stroke="#f0f0f0" d="M7 4v10h11"/><path stroke="#777" d="M32 4v10h11M57 4v10h11"/></g><rect x="9" y="9" width="4" height="3" fill="#f0f0f0"/><rect x="15" y="9" width="3" height="3" fill="#bdbdbd"/></svg>
<div class="a" style="left:875px;top:337.3px;width:122px;height:0.7px;background:#3a3a3a;"></div>
<div class="a" style="left:876px;top:344px;width:5.6px;height:5.6px;background:#5c5c5c;box-shadow:inset 0 0 0 .6px #3a3a3a"></div>
<span class="t b" style="left:884px;top:344.4px;font-size:6.7px;color:#ececec;">虛線</span>
<div class="a" style="left:956.5px;top:342.5px;width:18.5px;height:9.5px;background:#4a4a4a;border-radius:.6px;box-shadow:inset 0 0 0 .6px #626262"></div>
<div class="a" style="left:959px;top:345px;width:13.5px;height:4.5px;background:transparent;border:.7px dashed #6c6c6c"></div>
<div class="a" style="left:977.5px;top:342.5px;width:18.5px;height:9.5px;background:#4a4a4a;border-radius:.6px;box-shadow:inset 0 0 0 .6px #626262"></div>
<div class="a" style="left:980px;top:345px;width:13.5px;height:4.5px;background:transparent;border:.7px dashed #6c6c6c;border-radius:1.500px"></div>
<div class="a" style="left:876px;top:356.5px;width:18.5px;height:9px;background:#686868;box-shadow:inset 0 0 0 .6px #7c7c7c"></div>
<div class="a" style="left:896.5px;top:356.5px;width:18.5px;height:9px;background:#686868;box-shadow:inset 0 0 0 .6px #7c7c7c"></div>
<div class="a" style="left:916.5px;top:356.5px;width:18.5px;height:9px;background:#686868;box-shadow:inset 0 0 0 .6px #7c7c7c"></div>
<div class="a" style="left:937px;top:356.5px;width:18.5px;height:9px;background:#686868;box-shadow:inset 0 0 0 .6px #7c7c7c"></div>
<div class="a" style="left:957.5px;top:356.5px;width:18.5px;height:9px;background:#686868;box-shadow:inset 0 0 0 .6px #7c7c7c"></div>
<div class="a" style="left:977.5px;top:356.5px;width:18.5px;height:9px;background:#686868;box-shadow:inset 0 0 0 .6px #7c7c7c"></div>
<span class="t" style="left:878.5px;top:368.7px;font-size:6.6px;color:#7a7a7a;">虛線</span>
<span class="t" style="left:898.7px;top:368.7px;font-size:6.6px;color:#7a7a7a;">間隔</span>
<span class="t" style="left:919px;top:368.7px;font-size:6.6px;color:#7a7a7a;">虛線</span>
<span class="t" style="left:939.3px;top:368.7px;font-size:6.6px;color:#7a7a7a;">間隔</span>
<span class="t" style="left:959.6px;top:368.7px;font-size:6.6px;color:#7a7a7a;">虛線</span>
<span class="t" style="left:980px;top:368.7px;font-size:6.6px;color:#7a7a7a;">間隔</span>
<div class="a" style="left:872.5px;top:379px;width:127.5px;height:181.5px;background:#4a4a4a;"></div>
<div class="a" style="left:872.5px;top:379px;width:127.5px;height:9px;background:#2f2f2f;"></div>
<div class="a" style="left:873.5px;top:379px;width:16.5px;height:9px;background:#4a4a4a;box-shadow:inset 0 .5px 0 #5a5a5a"></div>
<span class="t b" style="left:876.5px;top:381.7px;font-size:5.6px;color:#ececec;">圖層</span>
<svg class="ic" style="left:990px;top:381.8px" width="7.500" height="4" viewBox="0 0 15 8"><path fill="#d8d8d8" d="M0 1.500h3.500L1.700 4z"/><path stroke="#9a9a9a" stroke-width="1.300" d="M5 1h10M5 4h10M5 7h10"/></svg>
<div class="a" style="left:875px;top:390px;width:122px;height:159.8px;background:#474747;box-shadow:inset .6px .6px 0 #3a3a3a,inset -.6px -.6px 0 #5a5a5a"></div>
<div class="a" style="left:875.5px;top:391.5px;width:120.8px;height:10.7px;background:#5b6577;"></div>
<div class="a" style="left:885.8px;top:391.5px;width:0.6px;height:10.7px;background:#4a5262;"></div>
<div class="a" style="left:896.3px;top:391.5px;width:0.6px;height:10.7px;background:#4a5262;"></div>
<div class="a" style="left:978.5px;top:391.5px;width:0.6px;height:10.7px;background:#4a5262;"></div>
<svg class="ic" style="left:877.300px;top:394px" width="7" height="5" viewBox="0 0 14 10"><path fill="#cfcfcf" d="M0 5c2-3.500 4.500-5 7-5s5 1.500 7 5c-2 3.500-4.500 5-7 5S2 8.500 0 5z"/><circle cx="7.500" cy="5" r="2.700" fill="#3a4252"/><circle cx="6.500" cy="4" r="1" fill="#e6e6e6"/></svg>
<div class="a" style="left:897.7px;top:392px;width:2px;height:9.7px;background:#4f7df3;"></div>
<div class="a" style="left:902.500px;top:394.300px;width:3.6px;height:4.8px;background:#f4f4f4;clip-path:polygon(0 0,100% 50%,0 100%)"></div>
<div class="a" style="left:911.5px;top:392.3px;width:9.2px;height:9.2px;background:#fff;box-shadow:0 0 0 .5px #222"></div>
<svg class="ic" style="left:911.500px;top:392.300px" width="9.200" height="9.200" viewBox="0 0 18 18"><path fill="none" stroke="#111" stroke-width="1.800" d="M10 3c-4-1-7 2-6.500 6 .5 3 3 4 5 2.500l3-1.500M14 5v12M12.500 13c-1.500 1-1.500 3 0 4"/><path stroke="#e8474b" stroke-width="1.300" d="M5 5.500h3.500"/></svg>
<span class="t b" style="left:924px;top:394.2px;font-size:6.6px;color:#ececec;">圖層 1</span>
<svg class="ic" style="left:981px;top:394.300px" width="12" height="5.400" viewBox="0 0 24 10.800"><circle cx="5.400" cy="5.400" r="4.200" fill="none" stroke="#2a2a2a" stroke-width="1.300"/><circle cx="5.400" cy="5.400" r="1.300" fill="#9aa3b3"/><circle cx="19" cy="5.400" r="4" fill="#2a58e0" stroke="#1a2a5a" stroke-width="1"/><circle cx="19" cy="5.400" r="1.500" fill="#dfe8ff"/></svg>
<div class="a" style="left:993.800px;top:391.500px;width:2.5px;height:2.5px;background:#f0f0f0;clip-path:polygon(0 0,100% 0,100% 100%)"></div>
<span class="t b" style="left:876px;top:552.9px;font-size:6.5px;color:#ececec;">1 個圖層</span>
<svg class="ic" style="left:925px;top:551.700px" width="7.500" height="7.500" viewBox="0 0 15 15"><circle cx="9" cy="6" r="4.500" fill="none" stroke="#e4e4e4" stroke-width="1.700"/><path stroke="#e4e4e4" stroke-width="2" d="M5.800 9.200L1 14"/></svg>
<svg class="ic" style="left:938px;top:551.700px" width="7" height="7.500" viewBox="0 0 14 15"><rect x="1" y="1" width="9" height="9" fill="#8a8a8a" stroke="#d8d8d8" stroke-width="1.300"/><rect x="4" y="4" width="4" height="4" fill="#e8e8e8"/><path fill="none" stroke="#9a9a9a" stroke-width="1.200" d="M12 5v8H5"/></svg>
<svg class="ic" style="left:950.500px;top:551.700px" width="9" height="7.500" viewBox="0 0 18 15"><path fill="none" stroke="#e0e0e0" stroke-width="1.400" d="M1 1c1 3 3 4 6 4"/><rect x="8" y="3" width="9" height="9" fill="#e8e8e8"/><path fill="#4a4a4a" d="M10 5h4v3h-4z"/><path fill="#e0e0e0" d="M0 0l4 .5L1 4z"/></svg>
<svg class="ic" style="left:966px;top:551.700px" width="6.500" height="7.500" viewBox="0 0 13 15"><path fill="#ececec" d="M0 2h13v12H0z"/><path fill="#4a4a4a" d="M2 4h6v4H2z"/><path fill="#4a4a4a" d="M0 11l4 3H0z"/></svg>
<svg class="ic" style="left:979px;top:551.500px" width="6.500" height="8" viewBox="0 0 13 16"><path fill="#656565" d="M0 2.500h13V4H0zM4 .5h5v2H4zM1.300 5h10.400l-1 11H2.300z"/></svg>
<!--/DOCK-->
<!--FP-->
<div class="a" style="left:685.3px;top:63.2px;width:156.5px;height:240.5px;background:#4a4a4a;box-shadow:0 0 0 .4px #222"></div>
<div class="a" style="left:685.3px;top:63.2px;width:156.5px;height:6.5px;background:#2a2a2a;"></div>
<svg class="ic" style="left:688.300px;top:65.300px" width="3" height="3" viewBox="0 0 6 6"><path stroke="#d8d8d8" stroke-width="1.200" d="M.5.500l5 5M5.500.500l-5 5"/></svg>
<svg class="ic" style="left:834.800px;top:65.500px" width="4" height="2.600" viewBox="0 0 8 5"><path fill="#c8c8c8" d="M3.500 0v5L0 2.500zM8 0v5L4.500 2.500z"/></svg>
<div class="a" style="left:685.3px;top:69.7px;width:156.5px;height:9px;background:#2e2e2e;"></div>
<div class="a" style="left:686.5px;top:69.7px;width:29.5px;height:9px;background:#4a4a4a;box-shadow:inset 0 .5px 0 #5c5c5c"></div>
<span class="t b" style="left:689.8px;top:72.3px;font-size:5.9px;color:#ececec;">影像描圖</span>
<div class="a" style="left:685.3px;top:63.2px;width:0.8px;height:240.5px;background:#2c2c2c;"></div>
<svg class="ic" style="left:721px;top:85px" width="86" height="9" viewBox="0 0 172 18" fill="none" stroke="#777" stroke-width="1.700">
<path d="M11 1.500l6.500 6.500-8 8L3 9.500z" fill="#6a6a6a"/><path d="M2.500 11.500c-2 2.500-1.500 5 .5 5s2-2.500-.5-5z" fill="#777"/>
<g transform="translate(31 0)"><rect x="1" y="4.500" width="15" height="11" fill="#707070"/><rect x="5.500" y="2" width="6" height="3" fill="#777"/><circle cx="8.500" cy="10" r="3" fill="#4a4a4a"/></g>
<g transform="translate(60 0)"><rect x="1" y="2" width="17" height="14"/><path d="M1 7h8V2" /><rect x="3" y="9" width="13" height="5" fill="#666" stroke="none"/></g>
<g transform="translate(89 0)"><rect x="1" y="2" width="18" height="14" fill="#6a6a6a"/><rect x="2.500" y="3.500" width="6" height="11" fill="#4a4a4a" stroke="none"/></g>
<g transform="translate(119 0)"><rect x="1" y="2" width="18" height="14"/><rect x="10" y="3" width="8" height="12" fill="#7c7c7c" stroke="none"/></g>
<g transform="translate(151 0)"><path d="M1.500 6l5-4.500 11 8.500-5.500 6.500z"/><circle cx="6" cy="6" r="1.300"/></g>
</svg>
<div class="a" style="left:690px;top:98.3px;width:148px;height:0.7px;background:#3c3c3c;"></div>
<span class="t" style="left:696px;top:105.7px;font-size:6.6px;color:#969696;">預設集:</span>
<div class="a" style="left:720.5px;top:103.5px;width:101.5px;height:10px;background:#404040;border-radius:.8px;box-shadow:inset 0 0 0 .6px #323232,0 .5px 0 #585858"></div>
<span class="t" style="left:723.5px;top:105.7px;font-size:6.9px;color:#8f8f8f;">[預設]</span>
<div class="a" style="left:816.3px;top:107.3px;width:4.4px;height:3px;background:#a6a6a6;clip-path:polygon(0 0,100% 0,50% 100%)"></div>
<span class="t" style="left:702.6px;top:120.7px;font-size:6.6px;color:#969696;">檢視:</span>
<div class="a" style="left:720.5px;top:118.5px;width:101.5px;height:10px;background:#404040;border-radius:.8px;box-shadow:inset 0 0 0 .6px #323232,0 .5px 0 #585858"></div>
<span class="t" style="left:723.5px;top:120.7px;font-size:6.9px;color:#8f8f8f;">描圖結果</span>
<div class="a" style="left:816.3px;top:122.3px;width:4.4px;height:3px;background:#a6a6a6;clip-path:polygon(0 0,100% 0,50% 100%)"></div>
<span class="t" style="left:702.6px;top:135.2px;font-size:6.6px;color:#969696;">模式:</span>
<div class="a" style="left:720.5px;top:133px;width:101.5px;height:10px;background:#404040;border-radius:.8px;box-shadow:inset 0 0 0 .6px #323232,0 .5px 0 #585858"></div>
<span class="t" style="left:723.5px;top:135.2px;font-size:6.9px;color:#8f8f8f;">黑白</span>
<div class="a" style="left:816.3px;top:136.8px;width:4.4px;height:3px;background:#a6a6a6;clip-path:polygon(0 0,100% 0,50% 100%)"></div>
<span class="t" style="left:689.2px;top:149.7px;font-size:6.6px;color:#969696;">浮動視窗:</span>
<div class="a" style="left:720.5px;top:147.5px;width:101.5px;height:10px;background:#404040;border-radius:.8px;box-shadow:inset 0 0 0 .6px #323232,0 .5px 0 #585858"></div>
<span class="t" style="left:723.5px;top:149.7px;font-size:6.9px;color:#8f8f8f;">受限</span>
<div class="a" style="left:816.3px;top:151.3px;width:4.4px;height:3px;background:#a6a6a6;clip-path:polygon(0 0,100% 0,50% 100%)"></div>
<svg class="ic" style="left:829px;top:106px" width="6.500" height="5" viewBox="0 0 13 10"><path stroke="#606060" stroke-width="1.400" d="M0 1h2M0 5h2M0 9h2M4 1h9M4 5h9M4 9h9"/></svg>
<svg class="ic" style="left:829px;top:121.300px" width="7.400" height="4.600" viewBox="0 0 15 9"><path fill="none" stroke="#7a7a7a" stroke-width="1.300" d="M.8 4.500C3 1.500 5 .7 7.500.7s4.500.8 6.700 3.800C12 7.500 10 8.300 7.500 8.300S3 7.500.8 4.500z"/><circle cx="7.500" cy="4.500" r="2" fill="#7a7a7a"/></svg>
<span class="t" style="left:696px;top:164.4px;font-size:6.6px;color:#9c9c9c;">臨界值:</span>
<div class="a" style="left:720.5px;top:166px;width:85.5px;height:1.3px;background:#353535;box-shadow:0 .5px 0 #5a5a5a"></div>
<div class="a" style="left:760.8px;top:163.8px;width:5.6px;height:5.6px;background:#4d4d4d;border-radius:50%;box-shadow:inset 0 0 0 .8px #2c2c2c,inset 0 0 0 .6px #6a6a6a"></div>
<div class="a" style="left:810px;top:162px;width:28px;height:8.7px;background:#6d6d6d;box-shadow:inset 0 0 0 .6px #808080"></div>
<span class="t" style="left:812.5px;top:163.9px;font-size:7px;color:#959595;">128</span>
<span class="t" style="left:720.3px;top:172.7px;font-size:4.9px;color:#a6a6a6;">較少</span>
<span class="t" style="left:796.3px;top:172.7px;font-size:4.9px;color:#a6a6a6;">較多</span>
<div class="a" style="left:692px;top:182.400px;width:3px;height:4.4px;background:#f0f0f0;clip-path:polygon(0 0,100% 50%,0 100%)"></div>
<span class="t b" style="left:699.5px;top:181.9px;font-size:6.5px;color:#ececec;">進階</span>
<div class="a" style="left:714.5px;top:183.3px;width:123.5px;height:0.7px;background:#3e3e3e;"></div>
<div class="a" style="left:689px;top:192.3px;width:149px;height:0.7px;background:#3e3e3e;"></div>
<svg class="ic" style="left:688.800px;top:201.500px" width="7.600" height="7.600" viewBox="0 0 20 20"><circle cx="10" cy="10" r="9.500" fill="#d2d2d2"/><rect x="8.300" y="8.500" width="3.600" height="7.500" fill="#3a3a3a"/><circle cx="10" cy="5.300" r="2" fill="#3a3a3a"/><rect x="7" y="8.500" width="3" height="1.500" fill="#3a3a3a"/><rect x="7" y="14.500" width="6.200" height="1.500" fill="#3a3a3a"/></svg>
<span class="t" style="left:702px;top:197.9px;font-size:6.8px;color:#8e8e8e;letter-spacing:.25px">路徑: 0</span>
<span class="t" style="left:771.5px;top:197.9px;font-size:6.8px;color:#8e8e8e;letter-spacing:.25px">顏色: 0</span>
<span class="t" style="left:702px;top:208.6px;font-size:6.8px;color:#8e8e8e;letter-spacing:.25px">錨點: 0</span>
<div class="a" style="left:689px;top:218.3px;width:149px;height:0.7px;background:#3e3e3e;"></div>
<div class="a" style="left:689.5px;top:224px;width:5.6px;height:5.6px;background:#4f4f4f;box-shadow:inset 0 0 0 .6px #5e5e5e"></div>
<span class="t" style="left:698px;top:224.4px;font-size:6.6px;color:#8e8e8e;">預視</span>
<div class="a" style="left:794.5px;top:222.8px;width:43px;height:9px;background:#585858;border-radius:.6px;box-shadow:inset 0 0 0 .6px #6a6a6a"></div>
<span class="t" style="left:809px;top:224.7px;font-size:6.7px;color:#8c8c8c;">描圖</span>
<div class="a" style="left:685.3px;top:235px;width:156.5px;height:1.5px;background:#2a2a2a;"></div>
<div class="a" style="left:685.3px;top:236.5px;width:156.5px;height:9.5px;background:#2e2e2e;"></div>
<div class="a" style="left:688px;top:237px;width:14px;height:9px;background:#3e3e3e;"></div>
<span class="t b" style="left:689.5px;top:239.5px;font-size:5.7px;color:#c4c4c4;">變形</span>
<div class="a" style="left:705.5px;top:237px;width:15px;height:9px;background:#3e3e3e;"></div>
<span class="t b" style="left:708.5px;top:239.5px;font-size:5.7px;color:#c4c4c4;">對齊</span>
<div class="a" style="left:723.5px;top:236.5px;width:35.5px;height:9.5px;background:#4a4a4a;box-shadow:inset 0 .5px 0 #5c5c5c"></div>
<span class="t b" style="left:727px;top:239.2px;font-size:5.75px;color:#ececec;">路徑管理員</span>
<svg class="ic" style="left:831.500px;top:239.500px" width="7.500" height="4" viewBox="0 0 15 8"><path fill="#d8d8d8" d="M0 1.500h3.500L1.700 4z"/><path stroke="#9a9a9a" stroke-width="1.300" d="M5 1h10M5 4h10M5 7h10"/></svg>
<span class="t b" style="left:688.5px;top:251.2px;font-size:6.25px;color:#ececec;">形狀模式：</span>
<svg class="ic" style="left:690.500px;top:262px" width="63" height="9.500" viewBox="0 0 126 19" stroke="#cfcfcf" stroke-width="1.150">
<rect x="1.500" y="1.500" width="10" height="10" rx="1" fill="#7c7c7c"/><rect x="6.500" y="6.500" width="10" height="10" rx="1" fill="#7c7c7c"/>
<g transform="translate(36 0)"><rect x="6.500" y="6.500" width="10" height="10" fill="none" stroke="#8a8a8a"/><path fill="#e0e0e0" stroke="none" d="M1 1h11v6H7v5H1z"/></g>
<g transform="translate(71 0)"><rect x="1.500" y="1.500" width="10" height="10" fill="none"/><rect x="6.500" y="6.500" width="10" height="10" fill="none"/><rect x="6.500" y="6.500" width="5" height="5" fill="#e0e0e0" stroke="none"/></g>
<g transform="translate(107 0)"><rect x="1.500" y="1.500" width="10" height="10" rx="1" fill="#7c7c7c"/><rect x="6.500" y="6.500" width="10" height="10" rx="1" fill="#7c7c7c"/><rect x="7" y="7" width="4.500" height="4.500" fill="#3a3a3a" stroke="none"/></g>
</svg>
<div class="a" style="left:761px;top:261.5px;width:46.5px;height:10px;background:#555;border-radius:.8px;box-shadow:inset 0 0 0 .6px #686868"></div>
<span class="t" style="left:777.5px;top:263.7px;font-size:6.7px;color:#8a8a8a;">展開</span>
<span class="t b" style="left:688.5px;top:277.9px;font-size:6.25px;color:#ececec;">路徑管理員：</span>
<svg class="ic" style="left:692.500px;top:289.500px" width="112" height="9" viewBox="0 0 224 18" stroke="#cfcfcf" stroke-width="1.150">
<rect x="1.500" y="1.500" width="6" height="6" fill="#9a9a9a"/><rect x="5" y="5" width="5" height="5" fill="#4a4a4a"/><rect x="9" y="9" width="7" height="7" fill="#9a9a9a"/>
<g transform="translate(40 0)"><rect x="1.500" y="1.500" width="9" height="9" fill="#d0d0d0"/><rect x="7" y="7" width="9.500" height="9.500" fill="#9a9a9a"/><path d="M1 6h10M6 1v10" stroke="#4a4a4a" stroke-width="1"/></g>
<g transform="translate(81 0)"><rect x="1.500" y="1.500" width="10" height="10" fill="#bdbdbd"/><rect x="7" y="7" width="9.500" height="9.500" fill="#8a8a8a"/></g>
<g transform="translate(122 0)" stroke="#777"><rect x="1.500" y="1.500" width="10" height="10" fill="none"/><rect x="6.500" y="6.500" width="10" height="10" fill="none"/><rect x="6.500" y="6.500" width="5" height="5" fill="#8a8a8a" stroke="none"/></g>
<g transform="translate(163 0)"><rect x="1.500" y="1.500" width="10" height="10" fill="none" rx="1"/><rect x="6.500" y="6.500" width="10" height="10" fill="none" rx="1"/></g>
<g transform="translate(203 0)"><rect x="6.500" y="1.500" width="10" height="10" fill="none" stroke="#9a9a9a"/><rect x="1.500" y="6.500" width="10" height="10" fill="none"/><path fill="#d8d8d8" stroke="none" d="M7.500 12.500h4v4h-4z"/></g>
</svg>
<!--/FP-->
</body>
</html>
